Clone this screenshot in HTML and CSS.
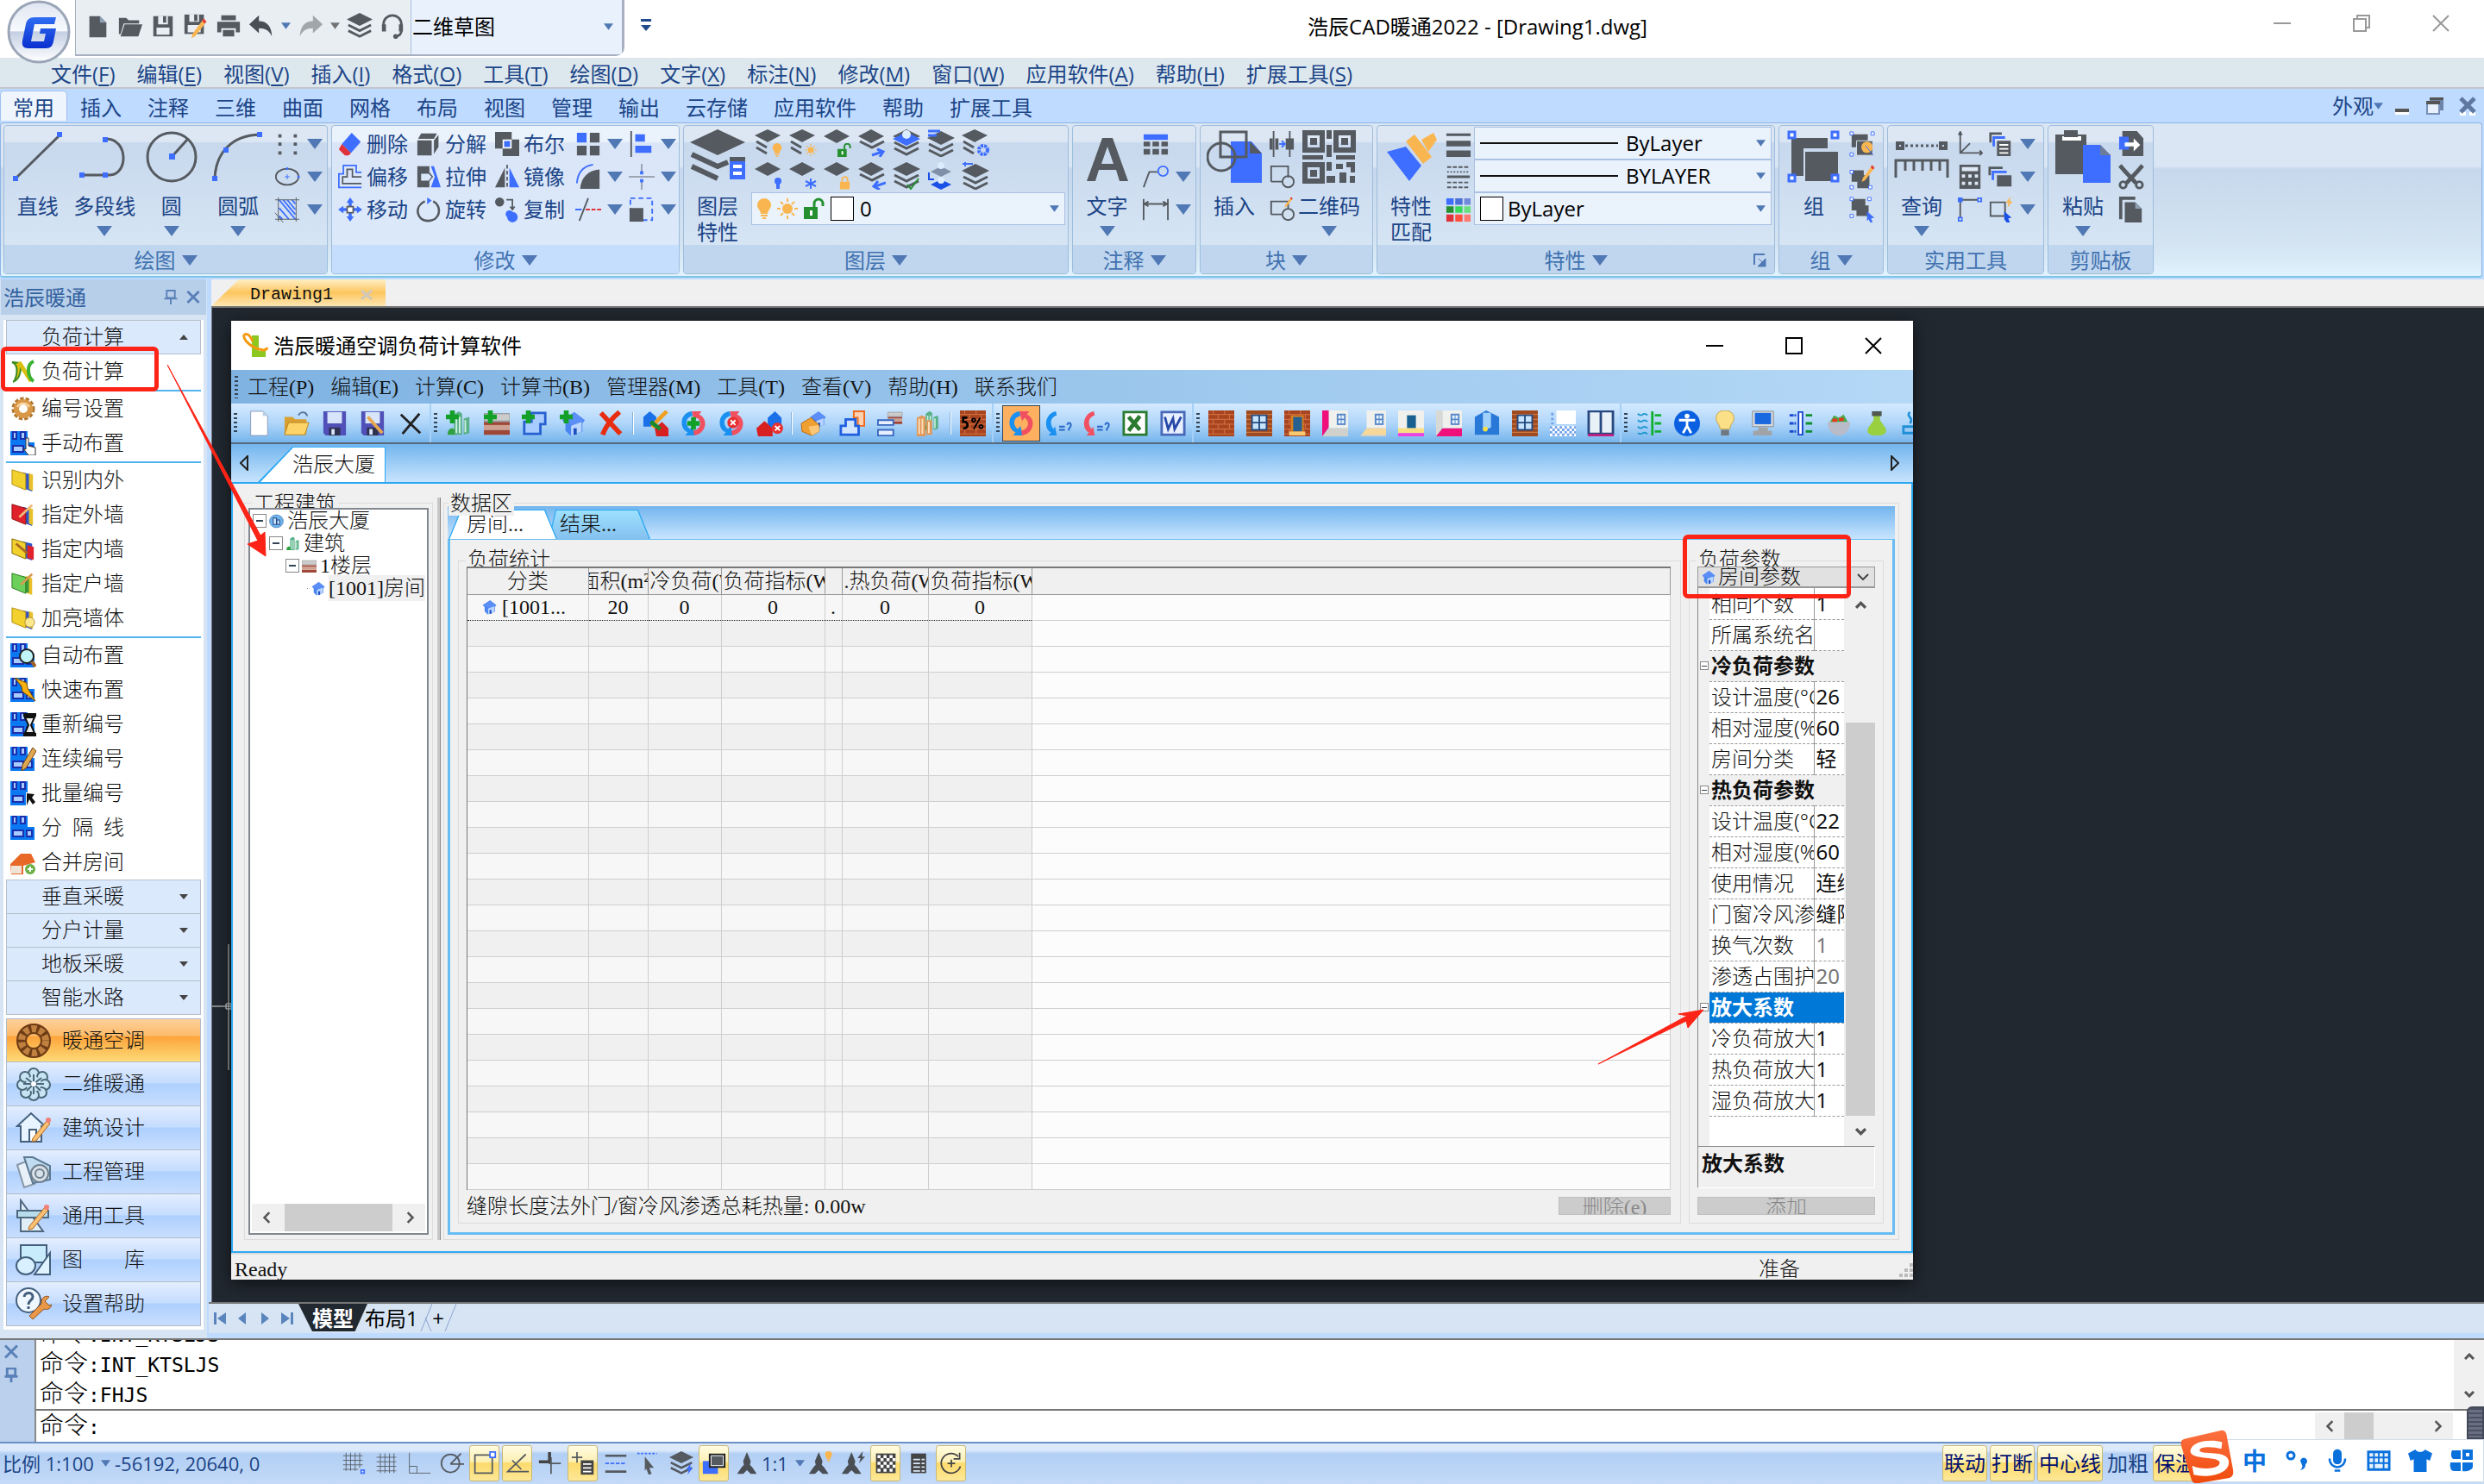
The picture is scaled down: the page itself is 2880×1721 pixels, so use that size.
FILE: index.html
```html
<!DOCTYPE html>
<html lang="zh-CN">
<head>
<meta charset="utf-8">
<title>浩辰CAD暖通2022 - [Drawing1.dwg]</title>
<link rel="stylesheet" href="styles.css">
</head>
<body>
<svg class="defs" aria-hidden="true">
<defs>
<linearGradient id="gLogo" x1="0" y1="0" x2="0" y2="1"><stop offset="0" stop-color="#dfe6f2"/><stop offset=".48" stop-color="#f7f9fd"/><stop offset=".5" stop-color="#c4cfe4"/><stop offset="1" stop-color="#fff"/></linearGradient>
<linearGradient id="gG" x1="0" y1="0" x2="0" y2="1"><stop offset="0" stop-color="#2f6df2"/><stop offset="1" stop-color="#0a2fd0"/></linearGradient>
<linearGradient id="gS" x1="0" y1="0" x2="0" y2="1"><stop offset="0" stop-color="#fb7040"/><stop offset="1" stop-color="#f04a0c"/></linearGradient>
<symbol id="dn" viewBox="0 0 18 12"><path d="M0 0h18l-9 12z" fill="#5078b4"/></symbol>
<symbol id="sheets" viewBox="0 0 32 32"><path d="M16 0l16 8-16 8L0 8z" fill="#555a60"/><path d="M2 15l14 7 14-7M2 22l14 7 14-7" fill="none" stroke="#555a60" stroke-width="3"/></symbol>
<symbol id="sheet2" viewBox="0 0 32 32"><path d="M15 0l15 7-15 8L0 7z" fill="#555a60"/><path d="M2 14l12 7M2 21l12 7" stroke="#555a60" stroke-width="3"/></symbol>
<symbol id="sheet1" viewBox="0 0 32 32"><path d="M15 0l15 8-15 8L0 8z" fill="#555a60"/></symbol>
<symbol id="bulb" viewBox="0 0 16 24"><path d="M8 0a8 8 0 0 1 8 8c0 4-4 6-4 10H4C4 14 0 12 0 8a8 8 0 0 1 8-8zM4 19h8v2H4zM6 22h4v2H6z" fill="#f9b650"/></symbol>
<symbol id="sun" viewBox="0 0 24 24"><circle cx="12" cy="12" r="6" fill="#f9b650"/><path d="M12 0v4M12 20v4M0 12h4M20 12h4M4 4l3 3M17 17l3 3M20 4l-3 3M7 17l-3 3" stroke="#f9b650" stroke-width="2"/></symbol>
<symbol id="unlock" viewBox="0 0 24 24"><path d="M0 10h16v14H0z" fill="#259030"/><path d="M12 10V6a5 5 0 0 1 10 0v3" fill="none" stroke="#259030" stroke-width="3"/><path d="M7 14h3v6H7z" fill="#fff"/></symbol>
<symbol id="lock" viewBox="0 0 24 24"><path d="M3 10h18v14H3z" fill="#f9b650"/><path d="M7 10V6a5 5 0 0 1 10 0v4" fill="none" stroke="#f9b650" stroke-width="3"/></symbol>
<symbol id="bolt" viewBox="0 0 12 20"><path d="M9 0L0 11h5l-2 9 9-12H7z" fill="#3d6eff"/></symbol>
<symbol id="obolt" viewBox="0 0 12 20"><path d="M9 0L0 11h5l-2 9 9-12H7z" fill="#f9b650"/></symbol>
<symbol id="rooms" viewBox="0 0 30 28"><path d="M0 0h20v13h8v15H0z" fill="#0a78f0"/><path d="M3 1h4v8H3zM12 1h5v8h-5zM3 17h12v7H3zM19 17h6v7h-6z" fill="#a8ccff" stroke="#1a2fb0" stroke-width="2"/></symbol>
<symbol id="wall" viewBox="0 0 30 30"><path d="M14 5l12 3v21l-8-3z" fill="#2f55c8"/><path d="M22 6l5 2v20l-5-2z" fill="#e8c02a"/><path d="M1 2l17 5v20L1 20z" fill="#f2d02e" stroke="#b08c10"/></symbol>
<symbol id="wallred" viewBox="0 0 30 30"><path d="M14 5l12 3v21l-8-3z" fill="#2f55c8"/><path d="M22 6l5 2v20l-5-2z" fill="#e8c02a"/><path d="M1 2l17 5v20L1 20z" fill="#e0202a" stroke="#901010"/><path d="M10 18L26 3" stroke="#f0b878" stroke-width="3"/></symbol>
<symbol id="wallin" viewBox="0 0 30 30"><path d="M14 5l12 3v21l-8-3z" fill="#2f55c8"/><path d="M20 10l8 2v16l-8-2z" fill="#e0202a"/><path d="M1 2l17 5v20L1 20z" fill="#f2d02e" stroke="#806808"/><path d="M6 8l14 12" stroke="#a86820" stroke-width="3"/></symbol>
<symbol id="wallgreen" viewBox="0 0 30 30"><path d="M18 5l8 3v21l-8-3z" fill="#e8c02a"/><path d="M14 5l8 3v18l-6 0z" fill="#3a9a3a"/><path d="M1 2l17 5v20L1 20z" fill="#6cd05a" stroke="#287820"/><path d="M12 16L26 3" stroke="#d89a50" stroke-width="3"/></symbol>
<symbol id="house" viewBox="0 0 32 32"><path d="M3 12L18 2l13 10-3 4v10l-15 5-6-6V16z" fill="#4a86f0"/><path d="M3 12L18 2l13 10-15 6z" fill="#5c8ef8"/><path d="M14 19l13-5v12l-13 5z" fill="#b8d4ff"/><path d="M17 22h4v8h-4z" fill="#2050c0"/></symbol>
<symbol id="plus" viewBox="0 0 16 16"><path d="M5 0h6v5h5v6h-5v5H5v-5H0V5h5z" fill="#12a028"/></symbol>
<symbol id="cyc" viewBox="0 0 32 32"><path d="M14 1C0 2-3 22 9 27l-3 4 12 0-3-12-3 4C5 19 6 8 15 7z" fill="#1a90f0"/><path d="M17 31c15-2 18-21 6-26l3-4H14l3 12 3-4c7 4 6 14-4 16z" fill="#f05060"/></symbol>
<symbol id="win" viewBox="0 0 32 32"><path d="M0 0h32v32H0z" fill="#a04a20"/><path d="M0 5h32M0 27h32M0 11h6M26 11h6M0 17h6M26 17h6M0 22h6M26 22h6" stroke="#d88850"/><path d="M6 5h20v20H6z" fill="#234a80"/><path d="M8 7h7v7H8zM17 7h7v7h-7zM8 16h7v7H8zM17 16h7v7h-7z" fill="#c8e4fc"/></symbol>
<symbol id="brick" viewBox="0 0 32 32"><path d="M0 0h32v32H0z" fill="#a84420"/><path d="M0 5h32M0 11h32M0 17h32M0 23h32M0 29h32M6 0v5M20 0v5M12 5v6M26 5v6M6 11v6M20 11v6M12 17v6M26 17v6M6 23v6M20 23v6" stroke="#d87848"/></symbol>
<symbol id="hroom" viewBox="0 0 32 32"><path d="M8 0h24v22H8z" fill="#f0f0ec"/><path d="M18 4h11v14H18z" fill="#5888c8"/><path d="M20 6h3v4h-3zM24 6h3v4h-3zM20 12h3v4h-3zM24 12h3v4h-3z" fill="#e8f4ff"/><path d="M8 22h24v10H0z" fill="#d0d0cc"/></symbol>
<symbol id="aa" viewBox="0 0 32 32"><path d="M16 1l5 12-1 5 3 3 6 9h-8l-5-5-5 5H3l6-9 3-3-1-5z" fill="#4a4f56"/></symbol>
<symbol id="bld" viewBox="0 0 32 32"><path d="M10 5l6-4 4 3v26H10zM22 10l7-2v20l-7 2z" fill="#58b088"/><path d="M13 8v20M17 8v20M24 12v15" stroke="#d0f0e0" stroke-width="2"/><path d="M2 30c0-8 6-10 9-6v6z" fill="#30a040"/></symbol>
<symbol id="floor" viewBox="0 0 32 32"><path d="M0 4h32v9H0z" fill="#ccc" stroke="#888"/><path d="M0 14h32v4H0zM0 24h32v6H0z" fill="#a04838"/><path d="M0 18h32v6H0z" fill="#d0a090"/></symbol>
<symbol id="plan" viewBox="0 0 32 32"><path d="M12 3h17v14h-6v12H3V14h9z" fill="#a8ccff" stroke="#2860d0" stroke-width="3"/></symbol>
<symbol id="floppy" viewBox="0 0 32 32"><path d="M2 1h28v30H5l-3-3z" fill="#5050b8"/><path d="M7 2h18v14H7z" fill="#d8e4fa"/><path d="M9 21h14v10H9z" fill="#303050"/><path d="M12 23h4v7h-4z" fill="#d8e4fa"/></symbol>
<symbol id="pen" viewBox="0 0 32 32"><path d="M27 1l4 5L14 28l-6 3 2-7z" fill="#f9b650"/><path d="M27 1l4 5-3 3-4-5z" fill="#e03a3a"/></symbol>
</defs>
</svg>

<header class="titlebar">
  <button class="logo" aria-label="应用程序菜单"><svg viewBox="0 0 76 76"><circle cx="38" cy="37" r="35" fill="url(#gLogo)" stroke="#9aa6b8" stroke-width="3"/><path d="M58 20H33c-6 0-9 3-10 8l-4 19c-1 6 1 9 7 9h20c6 0 8-3 9-8l3-15H40l-1 6h7l-2 9H29l4-20h23z" fill="url(#gG)"/></svg></button>
  <div class="qat">
    <button aria-label="新建"><svg viewBox="0 0 32 32"><path d="M6 4h13l8 8v18H6z" fill="#555a60"/><path d="M19 4l8 8h-8z" fill="#8fa0b5"/></svg></button>
    <button aria-label="打开"><svg viewBox="0 0 32 32"><path d="M2 6h9l3 3h13v4H8L4 26H2z" fill="#555a60"/><path d="M9 14h22l-5 15H4z" fill="#555a60"/></svg></button>
    <button aria-label="保存"><svg viewBox="0 0 32 32"><path d="M4 4h24v25H4z" fill="#555a60"/><path d="M10 4h12v10H10zM8 18h16v9H8z" fill="#e9eef2"/><path d="M16 4h4v8h-4z" fill="#555a60"/></svg></button>
    <button aria-label="另存为"><svg viewBox="0 0 32 32"><path d="M2 2h24v24H2z" fill="#555a60"/><path d="M8 2h12v9H8zM6 15h16v9H6z" fill="#e9eef2"/><path d="M14 2h4v8h-4z" fill="#555a60"/><use href="#pen" x="4" y="6" width="26" height="26"/></svg></button>
    <button aria-label="打印"><svg viewBox="0 0 32 32"><path d="M7 3h18v6H7zM2 11h28v13h-5v-5H7v5H2zM9 21h14v8H9z" fill="#555a60"/></svg></button>
    <button aria-label="撤销"><svg viewBox="0 0 32 32"><path d="M13 3v7c11 0 16 8 16 19-3-7-8-10-16-10v6L1 14z" fill="#4a4f56"/></svg></button>
    <svg class="tiny"><use href="#dn"/></svg>
    <button aria-label="重做"><svg viewBox="0 0 32 32"><path d="M19 3v7C8 10 3 18 3 29c3-7 8-10 16-10v6l12-11z" fill="#a2a6aa"/></svg></button>
    <svg class="tiny gray"><use href="#dn"/></svg>
    <button aria-label="图层"><svg><use href="#sheets"/></svg></button>
    <button aria-label="客服"><svg viewBox="0 0 32 32"><path d="M5 18v-4a11 11 0 0 1 22 0v8c0 4-3 6-6 7" fill="none" stroke="#555a60" stroke-width="3"/><path d="M3 14h5v9H3zM24 14h5v9h-5z" fill="#555a60"/><circle cx="20" cy="29" r="3" fill="#555a60"/></svg></button>
    <label class="workspace"><select aria-label="工作空间"><option>二维草图</option></select><svg class="tiny"><use href="#dn"/></svg></label>
  </div>
  <button class="custom" aria-label="自定义"><svg viewBox="0 0 12 16"><path d="M0 0h12v3H0zM0 7h12l-6 7z" fill="#1f4a8c"/></svg></button>
  <h1>浩辰CAD暖通2022 - [Drawing1.dwg]</h1>
  <div class="winbtns">
    <button aria-label="最小化"><svg viewBox="0 0 20 20"><path d="M0 10h20" stroke="#999" stroke-width="2"/></svg></button>
    <button aria-label="还原"><svg viewBox="0 0 20 20"><path d="M1 5h14v14H1zM5 5V1h14v14h-4" fill="none" stroke="#999" stroke-width="2"/></svg></button>
    <button aria-label="关闭"><svg viewBox="0 0 20 20"><path d="M1 1l18 18M19 1L1 19" stroke="#999" stroke-width="2"/></svg></button>
  </div>
</header>

<nav class="menubar">
  <a href="#">文件(<u>F</u>)</a><a href="#">编辑(<u>E</u>)</a><a href="#">视图(<u>V</u>)</a><a href="#">插入(<u>I</u>)</a><a href="#">格式(<u>O</u>)</a><a href="#">工具(<u>T</u>)</a><a href="#">绘图(<u>D</u>)</a><a href="#">文字(<u>X</u>)</a><a href="#">标注(<u>N</u>)</a><a href="#">修改(<u>M</u>)</a><a href="#">窗口(<u>W</u>)</a><a href="#">应用软件(<u>A</u>)</a><a href="#">帮助(<u>H</u>)</a><a href="#">扩展工具(<u>S</u>)</a>
</nav>

<nav class="ribbontabs">
  <a class="on" href="#">常用</a><a href="#">插入</a><a href="#">注释</a><a href="#">三维</a><a href="#">曲面</a><a href="#">网格</a><a href="#">布局</a><a href="#">视图</a><a href="#">管理</a><a href="#">输出</a><a href="#">云存储</a><a href="#">应用软件</a><a href="#">帮助</a><a href="#">扩展工具</a>
  <div class="docbtns">
    <button>外观<svg class="tiny"><use href="#dn"/></svg></button>
    <button aria-label="最小化文档"><svg viewBox="0 0 22 22"><path d="M3 14h16v4H3z" fill="#555"/><path d="M3 18h16v3H3z" fill="#fff"/></svg></button>
    <button aria-label="还原文档"><svg viewBox="0 0 22 22"><path d="M5 1h16v15h-4V5H5z" fill="#6c84a8"/><path d="M2 6h14v14H2z" fill="#e8f0fc" stroke="#7890b8" stroke-width="2"/><path d="M1 5h16v4H1zM5 1h16v3H5z" fill="#555"/></svg></button>
    <button aria-label="关闭文档"><svg viewBox="0 0 22 22"><path d="M2 20h7M13 20h7" stroke="#fff" stroke-width="4"/><path d="M3 2l16 16M19 2L3 18" stroke="#6078a0" stroke-width="5"/></svg></button>
  </div>
</nav>

<div class="ribbon">
  <section class="panel p-draw"><div class="pbody">
    <button class="big"><svg viewBox="0 0 64 64"><path d="M6 57L58 6" stroke="#555a60" stroke-width="3"/><path d="M3 54h6v6H3zM54 3h6v6h-6z" fill="#3d6eff"/></svg>直线</button>
    <button class="big"><svg viewBox="0 0 64 64"><path d="M6 53h32c22 0 22-42-4-42" fill="none" stroke="#555a60" stroke-width="3"/><path d="M3 50h6v6H3zM30 50h6v6h-6zM30 9h6v6h-6z" fill="#3d6eff"/></svg>多段线<svg class="ar"><use href="#dn"/></svg></button>
    <button class="big"><svg viewBox="0 0 64 64"><circle cx="32" cy="32" r="28" fill="none" stroke="#555a60" stroke-width="3"/><path d="M32 32L50 12" stroke="#555a60" stroke-width="3"/><path d="M29 28h7v7h-7z" fill="#3d6eff"/></svg>圆<svg class="ar"><use href="#dn"/></svg></button>
    <button class="big"><svg viewBox="0 0 64 64"><path d="M5 57C6 28 24 7 57 6" fill="none" stroke="#555a60" stroke-width="3"/><path d="M2 54h6v6H2zM54 3h6v6h-6zM15 21h6v6h-6z" fill="#3d6eff"/></svg>圆弧<svg class="ar"><use href="#dn"/></svg></button>
    <div class="smalls two">
      <button aria-label="点"><svg viewBox="0 0 32 32"><path d="M5 4h4v4H5zM24 4h4v4h-4zM5 14h4v4H5zM24 14h4v4h-4zM5 25h4v4H5zM24 25h4v4h-4z" fill="#555a60"/></svg></button><svg class="ar"><use href="#dn"/></svg>
      <button aria-label="椭圆"><svg viewBox="0 0 32 32"><ellipse cx="16" cy="16" rx="14" ry="10" fill="none" stroke="#555a60" stroke-width="2"/><path d="M16 13v6M13 16h6M29 15h2v2h-2zM15 5h2v2h-2z" stroke="#3d6eff" fill="#3d6eff"/></svg></button><svg class="ar"><use href="#dn"/></svg>
      <button aria-label="填充"><svg viewBox="0 0 32 32"><path d="M6 4l20 24M16 4l10 12M6 14l12 14M22 4l4 5M6 24l4 4M11 4l15 18" stroke="#3d6eff" stroke-width="2"/><path d="M1 4h30M1 28h30M5 1v30M27 1v30M1 20l10 12" stroke="#555a60" stroke-width="1"/></svg></button><svg class="ar"><use href="#dn"/></svg>
    </div></div><h2>绘图<svg class="ar"><use href="#dn"/></svg></h2></section>

  <section class="panel lit p-modify"><div class="pbody">
    <div class="tools">
      <button><svg viewBox="0 0 32 32"><path d="M18 1l12 12-13 15L5 16z" fill="#3d6eff"/><path d="M5 16l12 12-3 3H9l-8-8z" fill="#e0323a"/></svg>删除</button>
      <button><svg viewBox="0 0 32 32"><path d="M1 11h19v20H1zM6 2h21l-4 7H2zM23 11l6-7v16l-6 9z" fill="#555a60"/></svg>分解</button>
      <button><svg viewBox="0 0 32 32"><path d="M0 0h22v22H0zM10 10h22v22H10z" fill="#555a60"/><path d="M10 10h12v12H10z" fill="#fff"/><path d="M12 12h8v8h-8z" fill="#3d6eff"/></svg>布尔</button>
      <button><svg viewBox="0 0 32 32"><path d="M31 30H1V12h6V1h17v9h7" fill="none" stroke="#3d6eff" stroke-width="2"/><path d="M31 25H6v-9h6V6h7v10h12" fill="none" stroke="#555a60" stroke-width="2"/></svg>偏移</button>
      <button><svg viewBox="0 0 32 32"><path d="M1 2h16v8l5 6-5 6v8H1zM6 12v9h10l4-5-4-4z" fill="#555a60" fill-rule="evenodd"/><path d="M19 2h4l9 28H19l5-14z" fill="#3d6eff"/></svg>拉伸</button>
      <button><svg viewBox="0 0 32 32"><path d="M13 4v26H0z" fill="#555a60"/><path d="M19 4v26h13z" fill="#3d6eff"/><path d="M16 0v32" stroke="#555a60" stroke-width="2" stroke-dasharray="5 3"/></svg>镜像</button>
      <button><svg viewBox="0 0 32 32"><path d="M16 0l5 7h-3v6h-4V7h-3zM16 32l5-7h-3v-6h-4v6h-3zM0 16l7-5v3h6v4H7v3zM32 16l-7-5v3h-6v4h6v3z" fill="#3d6eff"/><path d="M12 12h8v8h-8z" fill="#fff" stroke="#555a60" stroke-width="2"/></svg>移动</button>
      <button><svg viewBox="0 0 32 32"><path d="M11 5C-4 12 0 31 15 31c17 0 19-20 7-26" fill="none" stroke="#555a60" stroke-width="3"/><path d="M14 0l6 4-6 5z" fill="#3d6eff"/></svg>旋转</button>
      <button><svg viewBox="0 0 32 32"><circle cx="6" cy="6" r="6" fill="#555a60"/><path d="M15 3h8v12M20 12l3 4 3-4" fill="none" stroke="#555a60" stroke-width="2"/><circle cx="23" cy="26" r="7" fill="#3d6eff"/><circle cx="19" cy="22" r="5" fill="#3d6eff"/></svg>复制</button>
    </div>
    <div class="smalls four">
      <button aria-label="阵列"><svg viewBox="0 0 32 32"><path d="M2 2h12v12H2z" fill="#3d6eff"/><path d="M18 2h12v12H18zM2 18h12v12H2zM18 18h12v12H18z" fill="#555a60"/></svg></button><svg class="ar"><use href="#dn"/></svg>
      <button aria-label="对齐"><svg viewBox="0 0 32 32"><path d="M3 0v32" stroke="#555a60" stroke-width="2"/><path d="M8 4h12v9H8zM8 18h20v9H8z" fill="#3d6eff"/></svg></button><svg class="ar"><use href="#dn"/></svg>
      <button aria-label="圆角"><svg viewBox="0 0 32 32"><path d="M6 31C7 17 16 8 30 7v24z" fill="#555a60"/><path d="M2 24C3 10 10 3 22 1" fill="none" stroke="#3d6eff" stroke-width="2"/></svg></button><svg class="ar"><use href="#dn"/></svg>
      <button aria-label="打断"><svg viewBox="0 0 32 32"><path d="M16 0v11M16 21v11M0 16h32" stroke="#555a60" stroke-width="1"/><path d="M14 9h4v4h-4zM14 19h4v4h-4z" fill="#3d6eff"/></svg></button><svg class="ar"><use href="#dn"/></svg>
      <button aria-label="修剪"><svg viewBox="0 0 32 32"><path d="M16 2L5 30" stroke="#555a60" stroke-width="2"/><path d="M0 16h8" stroke="#3d6eff" stroke-width="2"/><path d="M13 16h19" stroke="#e0323a" stroke-width="2" stroke-dasharray="5 2"/></svg></button><svg class="ar"><use href="#dn"/></svg>
      <button aria-label="缩放"><svg viewBox="0 0 32 32"><path d="M2 2h27v27H2z" fill="none" stroke="#3d6eff" stroke-width="2" stroke-dasharray="6 4"/><path d="M1 14h17v17H1z" fill="#555a60"/></svg></button><svg class="ar"><use href="#dn"/></svg>
    </div></div><h2>修改<svg class="ar"><use href="#dn"/></svg></h2></section>

  <section class="panel p-layer"><div class="pbody">
    <button class="big wrap"><svg viewBox="0 0 64 64"><path d="M32 0l32 15-32 15L0 15z" fill="#555a60"/><path d="M2 29l30 14 12-5M2 43l30 14" fill="none" stroke="#555a60" stroke-width="6"/><path d="M46 32h18v26H46z" fill="#3d6eff"/><path d="M46 32h18v5H46z" fill="#555a60"/><path d="M50 41h10v4H50zM50 49h10v4H50z" fill="#fff"/></svg>图层<br>特性</button>
    <div class="layercol">
      <div class="layericons">
        <button aria-label="关闭图层"><svg viewBox="0 0 32 32"><use href="#sheet2"/><use href="#bulb" x="20" y="16" width="12" height="16"/></svg></button>
        <button aria-label="冻结图层"><svg viewBox="0 0 32 32"><use href="#sheet2"/><use href="#sun" x="18" y="16" width="14" height="16"/></svg></button>
        <button aria-label="解锁图层"><svg viewBox="0 0 32 32"><use href="#sheet1"/><use href="#unlock" x="16" y="16" width="16" height="16"/></svg></button>
        <button aria-label="图层漫游"><svg viewBox="0 0 32 32"><use href="#sheet1"/><path d="M2 14l14 7 14-7" fill="none" stroke="#555a60" stroke-width="3"/><path d="M16 30l12-4M22 23l7 3-4 6" fill="none" stroke="#3d6eff" stroke-width="3"/></svg></button>
        <button aria-label="图层置为当前"><svg viewBox="0 0 32 32"><use href="#sheets"/><path d="M16 3l16 8-16 8L0 11z" fill="#3d6eff"/><circle cx="16" cy="6" r="5" fill="#dcecff"/></svg></button>
        <button aria-label="匹配图层"><svg viewBox="0 0 32 32"><use href="#sheets" y="2"/><path d="M1 2h14M1 7h10" stroke="#3d6eff" stroke-width="3"/></svg></button>
        <button aria-label="图层状态"><svg viewBox="0 0 32 32"><use href="#sheet2"/><circle cx="25" cy="24" r="5" fill="none" stroke="#3d6eff" stroke-width="4" stroke-dasharray="3 1"/></svg></button>
        <button aria-label="打开图层"><svg viewBox="0 0 32 32"><use href="#sheet1"/><circle cx="27" cy="22" r="4" fill="#3d6eff"/><path d="M25 24h4v7h-4z" fill="#3d6eff"/></svg></button>
        <button aria-label="解冻图层"><svg viewBox="0 0 32 32"><use href="#sheet1"/><path d="M25 19v12M19 22l12 6M31 22l-12 6" stroke="#3d6eff" stroke-width="2"/></svg></button>
        <button aria-label="锁定图层"><svg viewBox="0 0 32 32"><use href="#sheet1"/><use href="#lock" x="17" y="16" width="15" height="16"/></svg></button>
        <button aria-label="上一图层"><svg viewBox="0 0 32 32"><use href="#sheet1"/><path d="M2 14l14 7 14-7" fill="none" stroke="#555a60" stroke-width="3"/><path d="M32 24l-12 4M23 22l-5 6 7 4" fill="none" stroke="#3d6eff" stroke-width="3"/></svg></button>
        <button aria-label="更改图层"><svg viewBox="0 0 32 32"><use href="#sheets"/><path d="M17 26l4 5 9-12" fill="none" stroke="#259030" stroke-width="2"/></svg></button>
        <button aria-label="复制到图层"><svg viewBox="0 0 32 32"><path d="M16 5l12 6-12 6-12-6z" fill="#8090a8"/><path d="M16 20l12 6-12 6-12-6z" fill="#1a50e8"/><circle cx="16" cy="4" r="4" fill="#dcecff"/><circle cx="16" cy="21" r="4" fill="#dcecff"/><path d="M2 12v8h6" fill="none" stroke="#1a50e8" stroke-width="2"/></svg></button>
        <button aria-label="恢复图层"><svg viewBox="0 0 32 32"><use href="#sheets" y="2"/><path d="M1 2h12M4 0v5" stroke="#3d6eff" stroke-width="2"/></svg></button>
      </div>
      <label class="combo"><svg class="i16"><use href="#bulb"/></svg><svg class="i24"><use href="#sun"/></svg><svg class="i24"><use href="#unlock"/></svg><i class="swatch"></i><select aria-label="当前图层"><option>0</option></select><svg class="tiny"><use href="#dn"/></svg></label>
    </div></div><h2>图层<svg class="ar"><use href="#dn"/></svg></h2></section>

  <section class="panel p-anno"><div class="pbody">
    <button class="big"><svg viewBox="0 0 64 64"><path d="M26 10h12l18 50H46l-4-13H22l-4 13H8zM32 20l-7 20h14z" fill="#555a60" fill-rule="evenodd"/></svg>文字<svg class="ar"><use href="#dn"/></svg></button>
    <div class="smalls two">
      <button aria-label="表格"><svg viewBox="0 0 32 32"><path d="M1 4h30v7H1z" fill="#3d6eff"/><path d="M1 13h8v6H1zM12 13h8v6h-8zM23 13h8v6h-8zM1 22h8v7H1zM12 22h8v7h-8zM23 22h8v7h-8z" fill="#555a60"/></svg></button><i></i>
      <button aria-label="引线"><svg viewBox="0 0 32 32"><path d="M1 29L8 10h10" fill="none" stroke="#555a60" stroke-width="2"/><circle cx="25" cy="9" r="6" fill="none" stroke="#3d6eff" stroke-width="2"/></svg></button><svg class="ar"><use href="#dn"/></svg>
      <button aria-label="标注"><svg viewBox="0 0 32 32"><path d="M1 3v26M31 3v26M1 9h30M7 6L2 9l5 3M25 6l5 3-5 3" fill="none" stroke="#555a60" stroke-width="2"/></svg></button><svg class="ar"><use href="#dn"/></svg>
    </div></div><h2>注释<svg class="ar"><use href="#dn"/></svg></h2></section>

  <section class="panel p-block"><div class="pbody">
    <button class="big"><svg viewBox="0 0 64 64"><path d="M28 14h24l12 14v34H28z" fill="#3d6eff"/><path d="M50 14l14 14H50z" fill="#555a60"/><path d="M16 3h30v29H16z" fill="none" stroke="#555a60" stroke-width="3"/><circle cx="17" cy="32" r="16" fill="none" stroke="#555a60" stroke-width="3"/></svg>插入</button>
    <div class="smalls">
      <button aria-label="编辑块"><svg viewBox="0 0 32 32"><path d="M1 9h4v14H1zM8 9h4v14H8zM21 9h10v14H21z" fill="#555a60"/><path d="M6 0v32M26 0v32" stroke="#555a60" stroke-width="2"/><path d="M13 16h6M16 12l4 4-4 4" fill="none" stroke="#3d6eff" stroke-width="2"/></svg></button>
      <button aria-label="创建块"><svg viewBox="0 0 32 32"><path d="M3 22V3h21v14M3 22h14" fill="none" stroke="#555a60" stroke-width="2"/><circle cx="24" cy="22" r="7" fill="none" stroke="#555a60" stroke-width="2"/></svg></button>
      <button aria-label="属性"><svg viewBox="0 0 32 32"><path d="M3 22V6h21v10M3 22h14" fill="none" stroke="#555a60" stroke-width="2"/><circle cx="24" cy="22" r="7" fill="none" stroke="#555a60" stroke-width="2"/><use href="#pen" x="15" width="16" height="14"/></svg></button>
    </div>
    <button class="big"><svg viewBox="0 0 64 64"><path d="M4 4h20v20H4zM40 4h20v20H40zM4 41h20v19H4z" fill="none" stroke="#555a60" stroke-width="6"/><path d="M10 10h8v8h-8zM46 10h8v8h-8zM10 47h8v8h-8zM29 1h6v10h-6zM29 18h6v14h-6zM1 30h24v5H1zM40 30h22v5H40zM29 38h6v10h-6zM40 40h8v6h-8zM52 38h10v12h-5v-6h-5zM29 54h10v8H29zM44 50h8v12h-8zM56 54h6v8h-6z" fill="#555a60"/></svg>二维码<svg class="ar"><use href="#dn"/></svg></button>
    </div><h2>块<svg class="ar"><use href="#dn"/></svg></h2></section>

  <section class="panel p-prop"><div class="pbody">
    <button class="big wrap"><svg viewBox="0 0 64 64"><path d="M4 26l22-6 18 22-14 18z" fill="#3d6eff"/><path d="M26 14l10-8 20 26-10 8z" fill="#f9b650"/><path d="M44 12l14-8 4 8-10 14z" fill="#f9b650"/></svg>特性<br>匹配</button>
    <div class="smalls">
      <button aria-label="线宽"><svg viewBox="0 0 32 32"><path d="M1 3h30v3H1zM1 12h30v7H1zM1 24h30v8H1z" fill="#555a60"/></svg></button>
      <button aria-label="线型"><svg viewBox="0 0 32 32"><path d="M2 4h28M2 23h28M2 29h28" stroke="#555a60" stroke-width="2" stroke-dasharray="5 2"/><path d="M2 10h28" stroke="#555a60" stroke-width="2" stroke-dasharray="2 2"/><path d="M2 16h28" stroke="#555a60" stroke-width="3"/></svg></button>
      <button aria-label="颜色"><svg viewBox="0 0 32 32"><path d="M1 2h9v8H1z" fill="#3d6eff"/><path d="M12 2h9v8h-9z" fill="#4a70d8"/><path d="M23 2h8v8h-8z" fill="#6e8ad8"/><path d="M1 12h9v8H1z" fill="#259030"/><path d="M12 12h9v8h-9z" fill="#38d858"/><path d="M23 12h8v8h-8z" fill="#68e080"/><path d="M1 22h9v9H1z" fill="#e0323a"/><path d="M12 22h9v9h-9z" fill="#ff5040"/><path d="M23 22h8v9h-8z" fill="#ff7a72"/></svg></button>
    </div>
    <div class="combos">
      <label class="combo"><i class="line"></i><select aria-label="线宽"><option>ByLayer</option></select><svg class="tiny"><use href="#dn"/></svg></label>
      <label class="combo"><i class="line"></i><select aria-label="线型"><option>BYLAYER</option></select><svg class="tiny"><use href="#dn"/></svg></label>
      <label class="combo"><i class="swatch"></i><select aria-label="颜色"><option>ByLayer</option></select><svg class="tiny"><use href="#dn"/></svg></label>
    </div></div><h2>特性<svg class="ar"><use href="#dn"/></svg><svg class="launch" viewBox="0 0 16 16"><path d="M1 13V1h12" fill="none" stroke="#5078b4" stroke-width="2"/><path d="M6 6l7 7M14 6v9H5z" fill="#5078b4" stroke="#5078b4"/></svg></h2></section>

  <section class="panel p-group"><div class="pbody">
    <button class="big"><svg viewBox="0 0 64 64"><path d="M6 10h42v12H20v32H6zM22 26h38v34H22z" fill="#555a60"/><path d="M3 3h7v7H3zM53 3h7v7h-7zM3 53h7v7H3zM53 53h7v7h-7z" fill="#fff" stroke="#3d6eff" stroke-width="3"/></svg>组</button>
    <div class="smalls">
      <button aria-label="解除编组"><svg viewBox="0 0 32 32"><path d="M3 4h20v16H3z" fill="#555a60"/><path d="M9 12h20v18H9z" fill="#555a60" stroke="#dde8f4"/><circle cx="22" cy="20" r="7" fill="#f9b650"/><path d="M20 18l10 12M1 1h4v4H1zM27 1h4v4h-4zM1 27h4v4H1z" fill="#fff" stroke="#3d6eff"/></svg></button>
      <button aria-label="编辑组"><svg viewBox="0 0 32 32"><path d="M3 8h15v14H3zM10 14h15v16H10z" fill="#555a60"/><use href="#pen" x="10" width="22" height="24"/><path d="M1 8h4v4H1zM1 27h4v4H1zM24 27h4v4h-4z" fill="#fff" stroke="#3d6eff"/></svg></button>
      <button aria-label="选择组"><svg viewBox="0 0 32 32"><path d="M3 3h17v14H3zM9 11h15v13H9z" fill="#555a60"/><path d="M22 18l9 8-4 1 2 5-3 0-2-4-2 2z" fill="#3d6eff"/><path d="M1 1h4v4H1zM23 1h4v4h-4zM1 22h4v4H1z" fill="#fff" stroke="#3d6eff"/></svg></button>
    </div></div><h2>组<svg class="ar"><use href="#dn"/></svg></h2></section>

  <section class="panel p-util"><div class="pbody">
    <button class="big"><svg viewBox="0 0 64 64"><path d="M4 16h6v6H4zM54 16h6v6h-6z" fill="none" stroke="#555a60" stroke-width="4"/><path d="M13 19h38" stroke="#555a60" stroke-width="3" stroke-dasharray="3 3"/><path d="M2 56V36h60v20M13 36v12M23 36v12M33 36v12M43 36v12M53 36v12" fill="none" stroke="#555a60" stroke-width="3"/></svg>查询<svg class="ar"><use href="#dn"/></svg></button>
    <div class="smalls">
      <button aria-label="坐标"><svg viewBox="0 0 32 32"><path d="M4 2v25h27M4 27l12-12M2 5l2-4 2 4M28 24l3 3-3 3" fill="none" stroke="#555a60" stroke-width="2"/></svg></button>
      <button aria-label="计算器"><svg viewBox="0 0 32 32"><path d="M3 1h26v30H3z" fill="#555a60"/><path d="M6 4h20v5H6zM6 13h4v4H6zM14 13h4v4h-4zM22 13h4v4h-4zM6 22h4v4H6zM14 22h4v4h-4zM22 22h4v4h-4z" fill="#dde8f4"/></svg></button>
      <button aria-label="测量"><svg viewBox="0 0 32 32"><path d="M4 4v24M4 4h24" stroke="#555a60" stroke-width="2"/><path d="M1 1h6v6H1z" fill="#3d6eff"/><path d="M26 2h4v4h-4zM2 26h4v4H2z" fill="#fff" stroke="#3d6eff" stroke-width="2"/></svg></button>
    </div>
    <div class="smalls two">
      <button aria-label="快速选择"><svg viewBox="0 0 32 32"><path d="M3 14V3h14" fill="none" stroke="#555a60" stroke-width="3"/><path d="M7 19V8h14" fill="none" stroke="#3d6eff" stroke-width="3"/><path d="M11 12h17v19H11z" fill="#555a60"/><path d="M14 17h11M14 22h11M14 27h11" stroke="#fff" stroke-width="2"/></svg></button><svg class="ar"><use href="#dn"/></svg>
      <button aria-label="绘图次序"><svg viewBox="0 0 32 32"><path d="M2 14V5h16" fill="none" stroke="#555a60" stroke-width="3"/><path d="M6 20V10h17" fill="none" stroke="#3d6eff" stroke-width="3"/><path d="M11 14h18v14H11z" fill="#555a60"/></svg></button><svg class="ar"><use href="#dn"/></svg>
      <button aria-label="选择"><svg viewBox="0 0 32 32"><path d="M3 7h18v17H3z" fill="none" stroke="#555a60" stroke-width="2"/><use href="#obolt" x="20" width="12" height="14"/><path d="M20 18l9 8-4 1 2 5-4 0-3-4z" fill="#1a50e8"/></svg></button><svg class="ar"><use href="#dn"/></svg>
    </div></div><h2>实用工具</h2></section>

  <section class="panel p-clip"><div class="pbody">
    <button class="big"><svg viewBox="0 0 64 64"><path d="M0 6h36v46H0z" fill="#555a60"/><path d="M8 8h22v5H8z" fill="#fff"/><path d="M10 1h16v8H10z" fill="#555a60"/><path d="M32 18h20l12 12v32H32z" fill="#3d6eff"/><path d="M52 18l12 12H52z" fill="#6d7c98"/></svg>粘贴<svg class="ar"><use href="#dn"/></svg></button>
    <div class="smalls">
      <button aria-label="粘贴为块"><svg viewBox="0 0 32 32"><path d="M5 0h18l8 9v22H5z" fill="#555a60"/><path d="M1 7h12v16H1z" fill="#3d6eff"/><path d="M8 14h11V9l8 8-8 8v-6H8z" fill="#fff"/></svg></button>
      <button aria-label="剪切"><svg viewBox="0 0 32 32"><path d="M2 2c10 12 14 15 20 22M30 2C20 14 16 17 10 24" stroke="#555a60" stroke-width="5" fill="none"/><circle cx="6" cy="26" r="4" fill="none" stroke="#555a60" stroke-width="3"/><circle cx="26" cy="26" r="4" fill="none" stroke="#555a60" stroke-width="3"/></svg></button>
      <button aria-label="复制"><svg viewBox="0 0 32 32"><path d="M1 0h20v4H5v24H1z" fill="#555a60"/><path d="M8 7h13l8 8v17H8z" fill="#555a60"/><path d="M21 7l8 8h-8z" fill="#8fa0b5"/></svg></button>
    </div></div><h2>剪贴板</h2></section>
</div>

<main class="work">
  <aside class="side">
    <div class="sidehead"><h2>浩辰暖通</h2>
      <button aria-label="固定"><svg viewBox="0 0 16 18"><path d="M3 1h10v9H3zM0 11h16M8 11v7" fill="none" stroke="#5a80b8" stroke-width="2"/></svg></button>
      <button aria-label="关闭面板"><svg viewBox="0 0 16 18"><path d="M1 2l14 14M15 2L1 16" stroke="#5a80b8" stroke-width="3"/></svg></button></div>
    <div class="sidebox">
      <button class="acc up">负荷计算<svg viewBox="0 0 10 6"><path d="M0 6h10L5 0z"/></svg></button>
      <ul>
        <li class="hot sep"><button><svg viewBox="0 0 30 28"><path d="M2 3c10 4 4 22 1 23 9-3 10-16 8-22z" fill="#e0c010" stroke="#3a8a20" stroke-width="2"/><path d="M10 3l14 22" fill="none" stroke="#d8c010" stroke-width="5"/><path d="M27 2c-10 4-6 20 0 23" fill="none" stroke="#38b030" stroke-width="4"/></svg>负荷计算</button></li>
        <li><button><svg viewBox="0 0 30 28"><circle cx="15" cy="14" r="11" fill="none" stroke="#b07830" stroke-width="5" stroke-dasharray="4 2"/><circle cx="15" cy="14" r="8" fill="none" stroke="#d89848" stroke-width="6"/><path d="M8 12a8 8 0 0 1 14 0" fill="none" stroke="#fcdca8" stroke-width="2"/></svg>编号设置</button></li>
        <li class="sep"><button><svg viewBox="0 0 30 28"><use href="#rooms"/><path d="M18 8l3 0v9l8 2v9h-8l-6-8 3 1z" fill="#fff" stroke="#333"/></svg>手动布置</button></li>
        <li><button><svg><use href="#wall"/></svg>识别内外</button></li>
        <li><button><svg><use href="#wallred"/></svg>指定外墙</button></li>
        <li><button><svg><use href="#wallin"/></svg>指定内墙</button></li>
        <li><button><svg><use href="#wallgreen"/></svg>指定户墙</button></li>
        <li class="sep"><button><svg viewBox="0 0 30 30"><use href="#wall"/><circle cx="23" cy="20" r="6" fill="#fbe890" stroke="#b09030"/></svg>加亮墙体</button></li>
        <li><button><svg viewBox="0 0 30 28"><use href="#rooms"/><circle cx="19" cy="15" r="8" fill="#c0f4f8" stroke="#222" stroke-width="2"/><path d="M25 21l4 6" stroke="#a06028" stroke-width="4"/></svg>自动布置</button></li>
        <li><button><svg viewBox="0 0 30 28"><use href="#rooms"/><path d="M5 0l14 6 1 6 9 15-15-11-1-6z" fill="#f8b010" stroke="#7a5000"/></svg>快速布置</button></li>
        <li><button><svg viewBox="0 0 30 28"><use href="#rooms"/><path d="M15 3h15M15 26h15" stroke="#111" stroke-width="4"/><path d="M17 6h11l-4 9 4 9H17l4-9z" fill="#eee" stroke="#111" stroke-width="2"/></svg>重新编号</button></li>
        <li><button><svg viewBox="0 0 30 28"><use href="#rooms"/><path d="M26 1l4 4-12 20-5 3 1-7z" fill="#e0a850" stroke="#704010"/></svg>连续编号</button></li>
        <li><button><svg viewBox="0 0 30 28"><use href="#rooms"/><path d="M18 13h12v15H18z" fill="#fff"/><path d="M19 28V14l9 1-3 4 4 5-3 3-4-6z" fill="#111"/></svg>批量编号</button></li>
        <li><button><svg><use href="#rooms"/></svg>分 &nbsp;隔 &nbsp;线</button></li>
        <li><button><svg viewBox="0 0 30 28"><path d="M0 16L12 4h12l5 10-14 4v10H1z" fill="#e86828"/><path d="M1 18h12v9H1z" fill="#f0e4d8"/><circle cx="23" cy="22" r="6" fill="#6cb048"/><path d="M23 19v6M20 22h6" stroke="#fff" stroke-width="2"/></svg>合并房间</button></li>
      </ul>
      <button class="acc top">垂直采暖<svg viewBox="0 0 10 6"><path d="M0 0h10L5 6z"/></svg></button>
      <button class="acc">分户计量<svg viewBox="0 0 10 6"><path d="M0 0h10L5 6z"/></svg></button>
      <button class="acc">地板采暖<svg viewBox="0 0 10 6"><path d="M0 0h10L5 6z"/></svg></button>
      <button class="acc last">智能水路<svg viewBox="0 0 10 6"><path d="M0 0h10L5 6z"/></svg></button>
      <button class="cat on"><svg viewBox="0 0 42 40"><circle cx="21" cy="20" r="14" fill="none" stroke="#6e3c14" stroke-width="12"/><circle cx="21" cy="20" r="14" fill="none" stroke="#c08040" stroke-width="8" stroke-dasharray="6 3"/></svg>暖通空调</button>
      <button class="cat"><svg viewBox="0 0 42 40"><g fill="#c8e4f4" stroke="#4a6878" stroke-width="2"><circle cx="21" cy="8" r="6"/><circle cx="31" cy="12" r="6"/><circle cx="34" cy="21" r="6"/><circle cx="30" cy="30" r="6"/><circle cx="21" cy="33" r="6"/><circle cx="12" cy="30" r="6"/><circle cx="8" cy="21" r="6"/><circle cx="11" cy="12" r="6"/></g><circle cx="21" cy="20" r="9" fill="#c8e4f4"/><path d="M21 20V9M21 20l9-7M21 20h12M21 20l8 8M21 20v12M21 20l-8 8M21 20H9M21 20l-9-7" stroke="#4a6878" stroke-width="2"/><circle cx="21" cy="20" r="3" fill="#fff"/></svg>二维暖通</button>
      <button class="cat"><svg viewBox="0 0 42 40"><path d="M2 18L18 3l16 15h-4v18H6V18z" fill="#e8f4ff" stroke="#44607c" stroke-width="2"/><path d="M16 22h8v14h-8z" fill="#fff" stroke="#44607c" stroke-width="2"/><path d="M20 32L36 12l4 3-16 20-5 1z" fill="#f8c070" stroke="#b06828"/><circle cx="38" cy="11" r="3" fill="#f08078"/></svg>建筑设计</button>
      <button class="cat"><svg viewBox="0 0 42 40"><path d="M2 12l10-4 10 26-12 4z" fill="#e8f0f8" stroke="#8898a8" stroke-width="2"/><path d="M10 3h10l20 10v16l-20 4z" fill="#c0dcf0" stroke="#5a7890" stroke-width="2"/><circle cx="28" cy="22" r="10" fill="#d8e0e8" stroke="#708090" stroke-width="2"/><circle cx="28" cy="22" r="5" fill="none" stroke="#708090" stroke-width="2"/></svg>工程管理</button>
      <button class="cat"><svg viewBox="0 0 42 40"><path d="M6 2v36h26z" fill="#e0eef8" stroke="#506880" stroke-width="2"/><path d="M2 14h36v8H2z" fill="#b8dcec" stroke="#506880" stroke-width="2"/><path d="M16 32L34 10l4 3-18 22-5 1z" fill="#f8c070" stroke="#b06828"/><circle cx="36" cy="10" r="3" fill="#f08078"/></svg>通用工具</button>
      <button class="cat"><svg viewBox="0 0 42 40"><path d="M6 3h30v20H6z" fill="#c8ecfc" stroke="#44607c" stroke-width="2"/><path d="M22 37L40 12v25z" fill="#e0f4ff" stroke="#44607c" stroke-width="2"/><ellipse cx="12" cy="27" rx="11" ry="10" fill="#d8f0ff" stroke="#44607c" stroke-width="2"/></svg>图 &nbsp; &nbsp; &nbsp; &nbsp;库</button>
      <button class="cat"><svg viewBox="0 0 42 40"><circle cx="15" cy="16" r="14" fill="#f0f8ff" stroke="#44607c" stroke-width="2"/><path d="M10 12c1-6 10-6 10 0 0 4-5 4-5 9M15 23v3" fill="none" stroke="#44607c" stroke-width="3"/><path d="M16 34l14-14c-1-8 6-10 9-8l-5 5 5 5 3-1c-2 6-6 6-9 5L20 38z" fill="#e89848" stroke="#90501c"/></svg>设置帮助</button>
    </div>
  </aside>

  <section class="stage">
    <div class="doctabs"><a href="#">Drawing1 <svg viewBox="0 0 14 14"><path d="M1 2l12 10M13 2L1 12" stroke="#d0c8b8" stroke-width="3"/></svg></a></div>
    <div class="canvas">
      <svg class="cross" viewBox="0 0 24 146"><path d="M19 0v146M0 72h24" stroke="#e8e8e8" stroke-width="1"/><path d="M16 69h6v6h-6z" fill="none" stroke="#e8e8e8"/></svg>
      <section class="dialog">
        <header class="dtitle"><svg viewBox="0 0 30 30"><path d="M11 3h8v18h8v7H11z" fill="#8cc820"/><path d="M2 2C-1 12 26 26 29 17M2 2c6-2 8 4 10 8" fill="none" stroke="#f49a10" stroke-width="3"/></svg><h2>浩辰暖通空调负荷计算软件</h2>
          <button aria-label="最小化"><svg viewBox="0 0 20 20"><path d="M0 10h20" stroke="#000" stroke-width="2"/></svg></button><button aria-label="最大化"><svg viewBox="0 0 20 20"><path d="M1 1h18v18H1z" fill="none" stroke="#000" stroke-width="2"/></svg></button><button aria-label="关闭"><svg viewBox="0 0 20 20"><path d="M1 1l18 18M19 1L1 19" stroke="#000" stroke-width="2"/></svg></button></header>
        <nav class="dmenu"><i class="grip"></i><a href="#">工程(P)</a><a href="#">编辑(E)</a><a href="#">计算(C)</a><a href="#">计算书(B)</a><a href="#">管理器(M)</a><a href="#">工具(T)</a><a href="#">查看(V)</a><a href="#">帮助(H)</a><a href="#">联系我们</a></nav>
        <div class="dtools">
          <div class="tgroup"><i class="grip"></i>
            <button aria-label="新建"><svg viewBox="0 0 32 32"><path d="M6 1h15l6 6v24H6z" fill="#fff" stroke="#8898b8"/><path d="M21 1l6 6h-6z" fill="#c0d0e8"/></svg></button>
            <button aria-label="打开"><svg viewBox="0 0 32 32"><path d="M1 8h10l3 3h14v19H1z" fill="#d8a030"/><path d="M6 15h25l-5 15H1z" fill="#fcd468" stroke="#b88420"/><path d="M18 6c4-6 10-4 11 1" fill="none" stroke="#6078a0" stroke-width="2"/></svg></button>
            <button aria-label="保存"><svg><use href="#floppy"/></svg></button>
            <button aria-label="另存为"><svg viewBox="0 0 32 32"><use href="#floppy"/><path d="M10 8l18 20" stroke="#e8a850" stroke-width="4"/></svg></button>
            <button aria-label="关闭工程"><svg viewBox="0 0 32 32"><path d="M4 5l24 23M27 4L6 29" stroke="#222" stroke-width="3"/></svg></button></div>
          <div class="tgroup"><i class="grip"></i>
            <button aria-label="添加建筑"><svg viewBox="0 0 32 32"><use href="#bld"/><use href="#plus" width="16" height="16"/></svg></button>
            <button aria-label="添加楼层"><svg viewBox="0 0 32 32"><use href="#floor"/><use href="#plus" width="16" height="16"/></svg></button>
            <button aria-label="添加户型"><svg viewBox="0 0 32 32"><use href="#plan"/><use href="#plus" width="16" height="16"/></svg></button>
            <button aria-label="添加房间"><svg viewBox="0 0 32 32"><use href="#house"/><use href="#plus" width="16" height="16"/></svg></button>
            <button aria-label="删除"><svg viewBox="0 0 32 32"><path d="M4 3l24 26M27 2C18 9 10 20 6 30" stroke="#e82c10" stroke-width="6" fill="none"/></svg></button>
            <i class="bar"></i>
            <button aria-label="编辑房间"><svg viewBox="0 0 32 32"><path d="M1 8l8-7 8 7v12H1z" fill="#1a70e8"/><path d="M15 22l9-8 8 8v10H17z" fill="#d82020"/><path d="M30 1L18 13l-6 8" fill="none" stroke="#f0a020" stroke-width="5"/><path d="M10 14l12 9" stroke="#188828" stroke-width="5"/></svg></button>
            <button aria-label="提取"><svg viewBox="0 0 32 32"><use href="#cyc"/><use href="#plus" x="8" y="8" width="16" height="16"/></svg></button>
            <button aria-label="取消提取"><svg viewBox="0 0 32 32"><use href="#cyc"/><circle cx="18" cy="15" r="7" fill="#e83030"/><path d="M15 12l6 6M21 12l-6 6" stroke="#fff" stroke-width="2"/></svg></button>
            <button aria-label="删除房间"><svg viewBox="0 0 32 32"><path d="M14 9l9-8 8 8v12H14z" fill="#1a70e8"/><path d="M0 22l10-9 10 9v10H2z" fill="#d82020"/><circle cx="26" cy="22" r="7" fill="#e83030"/><path d="M23 19l6 6M29 19l-6 6" stroke="#fff" stroke-width="2"/></svg></button>
            <i class="bar"></i>
            <button aria-label="房间"><svg viewBox="0 0 32 32"><use href="#house" x="8" width="24" height="22"/><path d="M0 16l12-7 10 9v8l-9 5L1 26z" fill="#f0a030" stroke="#b86810"/><path d="M9 20l13-2v8l-9 5z" fill="#fcc878"/></svg></button>
            <button aria-label="户型"><svg viewBox="0 0 32 32"><path d="M18 1h13v18h-8V9h-5z" fill="#fcd0b0" stroke="#f06818" stroke-width="2"/><path d="M8 11h12v8h4v11H2V19h6z" fill="#d0e4ff" stroke="#2060e0" stroke-width="3"/></svg></button>
            <button aria-label="楼层"><svg viewBox="0 0 32 32"><use href="#floor" x="12" width="20" height="18"/><path d="M1 12h19v6H1zM1 24h19v7H1z" fill="#e8f0ff" stroke="#3868c0" stroke-width="2"/></svg></button>
            <button aria-label="建筑"><svg viewBox="0 0 32 32"><use href="#bld" x="4" width="28" height="26"/><path d="M2 9l6-3 5 2v24H2zM14 12h7v18h-7z" fill="#e09858"/><path d="M5 10v19M9 10v19M17 14v14" stroke="#fce0c0" stroke-width="2"/></svg></button>
            <i class="bar"></i>
            <button aria-label="百分之五"><svg viewBox="0 0 32 32"><use href="#brick"/><path d="M9 9H4v5c7-1 7 9 0 8" fill="none" stroke="#000" stroke-width="3"/><path d="M25 9l-8 14" stroke="#000" stroke-width="2"/><circle cx="17" cy="12" r="2" fill="none" stroke="#000" stroke-width="2"/><circle cx="26" cy="20" r="2" fill="none" stroke="#000" stroke-width="2"/></svg></button></div>
          <div class="tgroup"><i class="grip"></i>
            <button class="on" aria-label="计算"><svg><use href="#cyc"/></svg></button>
            <button aria-label="冷负荷公式"><svg viewBox="0 0 32 32"><path d="M12 1C-3 4-3 24 6 27l-3 4h10l-2-11-2 3C4 17 5 8 13 6z" fill="#1a90f0"/><path d="M16 20h7M16 24h7M26 18c1-5 6-2 4 2l-2 3v2" fill="none" stroke="#2868c8" stroke-width="2"/></svg></button>
            <button aria-label="热负荷公式"><svg viewBox="0 0 32 32"><path d="M12 1C-3 4-3 24 6 27l-3 4h10l-2-11-2 3C4 17 5 8 13 6z" fill="#f05060"/><path d="M16 20h7M16 24h7M26 18c1-5 6-2 4 2l-2 3v2" fill="none" stroke="#2868c8" stroke-width="2"/></svg></button>
            <button aria-label="输出表格"><svg viewBox="0 0 32 32"><path d="M2 2h28v28H2z" fill="#fff" stroke="#2a7a30" stroke-width="3"/><path d="M8 8l14 16M22 7L8 25" stroke="#2a7a30" stroke-width="5"/></svg></button>
            <button aria-label="输出文档"><svg viewBox="0 0 32 32"><path d="M2 2h28v28H2z" fill="#e8f0ff" stroke="#4868b8" stroke-width="3"/><path d="M6 8l4 15 6-13 2 13 8-15" fill="none" stroke="#2848a8" stroke-width="3"/></svg></button></div>
          <div class="tgroup"><i class="grip"></i>
            <button aria-label="外墙"><svg><use href="#brick"/></svg></button>
            <button aria-label="外窗"><svg><use href="#win"/></svg></button>
            <button aria-label="外门"><svg viewBox="0 0 32 32"><use href="#brick"/><path d="M8 6h16v20H8z" fill="#d88020"/><path d="M11 8h11v18H11z" fill="#286090"/><path d="M6 26h20v5H6z" fill="#f8c870"/></svg></button>
            <button aria-label="内墙"><svg viewBox="0 0 32 32"><use href="#hroom"/><path d="M0 0h8v21l-8 11z" fill="#f0107c"/></svg></button>
            <button aria-label="楼板"><svg viewBox="0 0 32 32"><use href="#hroom"/><path d="M8 22h24v8H2z" fill="#f8d898"/></svg></button>
            <button aria-label="内门"><svg viewBox="0 0 32 32"><path d="M0 0h32v28H0z" fill="#f0f0ec"/><path d="M11 6h11v16H11z" fill="#186090"/><path d="M0 22h32v6H0z" fill="#f8e080"/><path d="M0 28h32v4H0z" fill="#f040e0"/></svg></button>
            <button aria-label="地面"><svg viewBox="0 0 32 32"><use href="#hroom"/><path d="M0 0h8v21l-8 11z" fill="#d8d8d4"/><path d="M8 22h24v10H0z" fill="#f0107c"/></svg></button>
            <button aria-label="天窗"><svg viewBox="0 0 32 32"><path d="M1 8L15 0l16 8v22H1z" fill="#2878d8"/><path d="M11 3l10 0v18l-10 4z" fill="#a0d0fc"/><circle cx="14" cy="23" r="3" fill="#f8e040"/></svg></button>
            <button aria-label="内窗"><svg><use href="#win"/></svg></button>
            <button aria-label="屋面"><svg viewBox="0 0 32 32"><path d="M8 0h24v17H8z" fill="#fff"/><path d="M0 19h32v13H0z" fill="#fff"/><path d="M0 21h32M0 27h32" stroke="#70a0e8" stroke-width="3" stroke-dasharray="3 3"/><path d="M3 24h29M3 30h29M3 3v14" stroke="#70a0e8" stroke-width="3" stroke-dasharray="3 3"/></svg></button>
            <button aria-label="幕墙"><svg viewBox="0 0 32 32"><path d="M1 1h30v28H1z" fill="#e8f0f8" stroke="#284880" stroke-width="3"/><path d="M16 0v28" stroke="#284880" stroke-width="3"/><path d="M0 29h32v3H0z" fill="#c02080"/></svg></button></div>
          <div class="tgroup"><i class="grip"></i>
            <button aria-label="渗透"><svg viewBox="0 0 32 32"><path d="M2 4c6 6 6-4 12 2M2 12c6 6 6-4 12 2M2 20c6 6 6-4 12 2M2 28c6 4 6-4 12 1" fill="none" stroke="#2098d0" stroke-width="2"/><path d="M20 1v30M23 6h8M23 16h8M23 26h8" stroke="#10b030" stroke-width="3"/></svg></button>
            <button aria-label="人体"><svg viewBox="0 0 32 32"><circle cx="16" cy="16" r="16" fill="#0a60e0"/><path d="M6 12l20 0M16 12v8M16 19l-5 9M16 19l5 9" stroke="#fff" stroke-width="3"/><circle cx="16" cy="7" r="3" fill="#fff"/></svg></button>
            <button aria-label="灯光"><svg viewBox="0 0 32 32"><path d="M16 0c8 0 11 5 11 10 0 5-5 7-5 13H10C10 17 5 15 5 10 5 5 8 0 16 0z" fill="#fbe088" stroke="#c8a040"/><path d="M11 24h10v7H11z" fill="#707880"/></svg></button>
            <button aria-label="设备"><svg viewBox="0 0 32 32"><path d="M3 1h26v19H3z" fill="#d8dce0" stroke="#888"/><path d="M6 3h20v14H6z" fill="#1a68e0"/><path d="M10 21h12v4h5v6H4v-6h6z" fill="#a0a4a8"/></svg></button>
            <button aria-label="新风"><svg viewBox="0 0 32 32"><path d="M13 2h5v28h-5z" fill="#fff" stroke="#1848d0" stroke-width="2"/><path d="M2 6h8M2 16h8M2 26h8" stroke="#1848d0" stroke-width="3" stroke-dasharray="5 1"/><path d="M22 6h8M22 16h8M22 26h8" stroke="#109030" stroke-width="3"/></svg></button>
            <button aria-label="食物"><svg viewBox="0 0 32 32"><path d="M2 14h28c0 10-6 17-14 17S2 24 2 14z" fill="#b8bcc8"/><path d="M5 14l5-8 6 3 6-4 5 9z" fill="#48a848"/><path d="M8 12h6M16 11h6" stroke="#e83820" stroke-width="4"/></svg></button>
            <button aria-label="化学"><svg viewBox="0 0 32 32"><path d="M12 1h8v11l7 10c2 6-2 9-11 9S3 28 5 22l7-10z" fill="#98d040"/><path d="M10 1h12v6H10z" fill="#505850"/></svg></button>
            <button aria-label="水面"><svg viewBox="0 0 32 32"><path d="M10 2c-6 6 6 6 0 14M20 2c-6 6 6 6 0 14M2 20h28v8H2z" fill="none" stroke="#2090d8" stroke-width="3"/></svg></button></div>
        </div>
        <div class="dtabs"><svg class="nav" viewBox="0 0 10 18"><path d="M9 1v16L1 9z" fill="none" stroke="#222" stroke-width="2"/></svg><a class="proj" href="#"><span>浩辰大厦</span></a><svg class="nav" viewBox="0 0 10 18"><path d="M1 1v16l8-8z" fill="none" stroke="#222" stroke-width="2"/></svg></div>
        <div class="dbody">
          <section class="group treegroup"><h3>工程建筑</h3>
            <div class="tree">
              <div class="row"><i class="minus"></i><svg viewBox="0 0 32 32"><ellipse cx="16" cy="16" rx="15" ry="14" fill="#70b4ec" stroke="#2860a8"/><path d="M9 9h7v14H9zM17 13h6v10h-6z" fill="#d0e8fc" stroke="#204888" stroke-width="2"/></svg><span>浩辰大厦</span></div>
              <div class="row l1"><i class="minus"></i><svg><use href="#bld"/></svg><span>建筑</span></div>
              <div class="row l2"><i class="minus"></i><svg><use href="#floor"/></svg><span>1楼层</span></div>
              <div class="row l3"><i class="dots"></i><svg><use href="#house"/></svg><span class="sel">[1001]房间</span></div>
              <div class="hscroll"><svg viewBox="0 0 12 16"><path d="M10 1L3 8l7 7" fill="none" stroke="#555" stroke-width="3"/></svg><i></i><svg viewBox="0 0 12 16"><path d="M2 1l7 7-7 7" fill="none" stroke="#555" stroke-width="3"/></svg></div>
            </div>
          </section>
          <i class="splitter"></i>
          <section class="group datagroup"><h3>数据区</h3>
            <nav class="subtabs"><a class="on" href="#"><span>房间...</span></a><a href="#"><span>结果...</span></a></nav>
            <div class="page">
              <section class="group stats"><h3>负荷统计</h3>
                <div class="gridbox"><table>
                  <colgroup><col class="c1"><col class="c2"><col class="c3"><col class="c4"><col class="c5"><col class="c6"><col class="c4"><col></colgroup>
                  <thead><tr><th><div class="mid">分类</div></th><th><div class="mid">面积(m²)</div></th><th><div>冷负荷(W)</div></th><th><div>负荷指标(W/m²)</div></th><th></th><th><div>.热负荷(W)</div></th><th><div>负荷指标(W/m²)</div></th><th></th></tr></thead>
                  <tbody>
                  <tr class="first"><td><div class="room"><svg><use href="#house"/></svg>[1001...</div></td><td>20</td><td>0</td><td>0</td><td>.</td><td>0</td><td>0</td><td></td></tr>
                  <tr><td><td><td><td><td><td><td><td></tr><tr><td><td><td><td><td><td><td><td></tr><tr><td><td><td><td><td><td><td><td></tr><tr><td><td><td><td><td><td><td><td></tr>
                  <tr><td><td><td><td><td><td><td><td></tr><tr><td><td><td><td><td><td><td><td></tr><tr><td><td><td><td><td><td><td><td></tr><tr><td><td><td><td><td><td><td><td></tr>
                  <tr><td><td><td><td><td><td><td><td></tr><tr><td><td><td><td><td><td><td><td></tr><tr><td><td><td><td><td><td><td><td></tr><tr><td><td><td><td><td><td><td><td></tr>
                  <tr><td><td><td><td><td><td><td><td></tr><tr><td><td><td><td><td><td><td><td></tr><tr><td><td><td><td><td><td><td><td></tr><tr><td><td><td><td><td><td><td><td></tr>
                  <tr><td><td><td><td><td><td><td><td></tr><tr><td><td><td><td><td><td><td><td></tr><tr><td><td><td><td><td><td><td><td></tr><tr><td><td><td><td><td><td><td><td></tr>
                  <tr><td><td><td><td><td><td><td><td></tr><tr><td><td><td><td><td><td><td><td></tr>
                  </tbody></table></div>
                <div class="foot"><p>缝隙长度法外门/窗冷风渗透总耗热量: 0.00w</p><button class="flat" disabled>删除(e)</button></div>
              </section>
              <section class="group params"><h3>负荷参数</h3>
                <div class="roomcombo"><svg><use href="#house"/></svg><select aria-label="参数类型"><option>房间参数</option></select><svg class="chev" viewBox="0 0 14 8"><path d="M1 1l6 6 6-6" fill="none" stroke="#444" stroke-width="2"/></svg></div>
                <div class="pgrid">
                  <table>
                    <tr><td></td><td>相同个数</td><td>1</td></tr>
                    <tr><td></td><td>所属系统名</td><td></td></tr>
                    <tr class="cathead"><td><i class="minus"></i></td><td colspan="2">冷负荷参数</td></tr>
                    <tr><td></td><td>设计温度(°C)</td><td>26</td></tr>
                    <tr><td></td><td>相对湿度(%)</td><td>60</td></tr>
                    <tr><td></td><td>房间分类</td><td>轻</td></tr>
                    <tr class="cathead"><td><i class="minus"></i></td><td colspan="2">热负荷参数</td></tr>
                    <tr><td></td><td>设计温度(°C)</td><td>22</td></tr>
                    <tr><td></td><td>相对湿度(%)</td><td>60</td></tr>
                    <tr><td></td><td>使用情况</td><td>连续</td></tr>
                    <tr><td></td><td>门窗冷风渗透</td><td>缝隙</td></tr>
                    <tr><td></td><td>换气次数</td><td class="dim">1</td></tr>
                    <tr><td></td><td>渗透占围护</td><td class="dim">20</td></tr>
                    <tr class="cathead sel"><td><i class="minus"></i></td><td colspan="2">放大系数</td></tr>
                    <tr><td></td><td>冷负荷放大</td><td>1</td></tr>
                    <tr><td></td><td>热负荷放大</td><td>1</td></tr>
                    <tr><td></td><td>湿负荷放大</td><td>1</td></tr>
                  </table>
                  <div class="vscroll"><svg viewBox="0 0 12 8"><path d="M1 7l5-5 5 5" fill="none" stroke="#555" stroke-width="3"/></svg><i></i><svg viewBox="0 0 12 8"><path d="M1 1l5 5 5-5" fill="none" stroke="#555" stroke-width="3"/></svg></div>
                </div>
                <p class="desc">放大系数</p>
                <button class="flat wide" disabled>添加</button>
              </section>
            </div>
          </section>
        </div>
        <footer class="dstatus"><span>Ready</span><span class="rdy">准备</span><svg viewBox="0 0 18 18"><path d="M14 2h4v4h-4zM8 8h4v4H8zM14 8h4v4h-4zM2 14h4v4H2zM8 14h4v4H8zM14 14h4v4h-4z" fill="#bbb"/></svg></footer>
      </section>
    </div>
    <nav class="layouts">
      <button aria-label="第一个"><svg viewBox="0 0 14 14"><path d="M0 0h3v14H0zM14 0v14L4 7z" fill="#5a84bc"/></svg></button><button aria-label="上一个"><svg viewBox="0 0 14 14"><path d="M11 0v14L2 7z" fill="#5a84bc"/></svg></button><button aria-label="下一个"><svg viewBox="0 0 14 14"><path d="M3 0v14l9-7z" fill="#5a84bc"/></svg></button><button aria-label="最后一个"><svg viewBox="0 0 14 14"><path d="M11 0h3v14h-3zM0 0v14l10-7z" fill="#5a84bc"/></svg></button>
      <a class="on" href="#">模型</a><a class="lay" href="#">布局1</a><svg class="edgeline" viewBox="0 0 14 32"><path d="M14 0L1 32M6 16l7 16" fill="none" stroke="#8ca4d0"/></svg><a class="add" href="#">+</a><svg class="edgeline" viewBox="0 0 14 32"><path d="M14 0L1 32" fill="none" stroke="#8ca4d0"/></svg>
    </nav>
  </section>
</main>

<section class="command">
  <div class="cmdside"><svg viewBox="0 0 16 16"><path d="M1 1l14 14M15 1L1 15" stroke="#5a80b8" stroke-width="3"/></svg><svg viewBox="0 0 16 18"><path d="M3 1h10v9H3zM0 11h16M8 11v7" fill="none" stroke="#5a80b8" stroke-width="3"/></svg></div>
  <div class="cmdmain">
    <div class="log"><div class="lines"><p><b>命令</b>:INT_KTSLJS</p><p><b>命令</b>:INT_KTSLJS</p><p><b>命令</b>:FHJS</p></div>
      <div class="logscroll"><svg viewBox="0 0 12 8"><path d="M1 7l5-5 5 5" fill="none" stroke="#555" stroke-width="3"/></svg><svg viewBox="0 0 12 8"><path d="M1 1l5 5 5-5" fill="none" stroke="#555" stroke-width="3"/></svg></div></div>
    <div class="entry"><label for="cmd"><b>命令</b>:</label><input id="cmd" type="text"><div class="hscroll"><svg viewBox="0 0 12 16"><path d="M10 1L3 8l7 7" fill="none" stroke="#555" stroke-width="3"/></svg><i></i><svg viewBox="0 0 12 16"><path d="M2 1l7 7-7 7" fill="none" stroke="#555" stroke-width="3"/></svg></div></div>
  </div>
</section>

<footer class="status">
  <button class="scale">比例 1:100<svg class="tiny"><use href="#dn"/></svg></button><span class="coords">-56192, 20640, 0</span>
  <div class="sbtns">
    <button aria-label="捕捉"><svg viewBox="0 0 32 32"><path d="M2 6h26M2 12h26M2 18h26M2 24h20M6 2v24M12 2v24M18 2v24M24 2v20" stroke="#555a60" stroke-width="1"/><path d="M26 25h4v4h-4z" fill="#fff" stroke="#3d6eff" stroke-width="2"/></svg></button>
    <button aria-label="栅格"><svg viewBox="0 0 32 32"><path d="M3 8h26M3 14h26M3 20h26M3 26h26M8 3v26M14 3v26M20 3v26M26 3v26" stroke="#555a60" stroke-width="1"/></svg></button>
    <button aria-label="正交"><svg viewBox="0 0 32 32"><path d="M3 2v27h28M3 20h10v9" fill="none" stroke="#555a60" stroke-width="1"/></svg></button>
    <button aria-label="极轴"><svg viewBox="0 0 32 32"><circle cx="14" cy="16" r="12" fill="none" stroke="#555a60" stroke-width="2"/><path d="M14 17h18M14 17L28 3" stroke="#555a60" stroke-width="2"/></svg></button>
    <button class="on" aria-label="对象捕捉"><svg viewBox="0 0 32 32"><path d="M3 5h23v24H3z" fill="none" stroke="#555a60" stroke-width="2"/><path d="M23 1h7v7h-7z" fill="#fff" stroke="#3d6eff" stroke-width="2"/></svg></button>
    <button class="on" aria-label="对象追踪"><svg viewBox="0 0 32 32"><path d="M31 27H3L27 4M9 12l12 12" fill="none" stroke="#555a60" stroke-width="2"/></svg></button>
    <button aria-label="动态坐标"><svg viewBox="0 0 32 32"><path d="M1 14h14V1" fill="none" stroke="#444" stroke-width="4"/><path d="M17 8v22M14 16h16" stroke="#555a60" stroke-width="2"/></svg></button>
    <button class="on" aria-label="动态输入"><svg viewBox="0 0 32 32"><path d="M8 1v14M1 8h14" stroke="#555a60" stroke-width="2"/><path d="M13 12h17v19H13z" fill="#444"/><path d="M16 17h11M16 22h11M16 27h11" stroke="#fff" stroke-width="2"/></svg></button>
    <button aria-label="线宽"><svg viewBox="0 0 32 32"><path d="M2 6h28M2 27h28" stroke="#555a60" stroke-width="3"/><path d="M2 16h28" stroke="#3d6eff" stroke-width="2" stroke-dasharray="5 2"/></svg></button>
    <button aria-label="循环选择"><svg viewBox="0 0 32 32"><path d="M1 3h26" stroke="#3d6eff" stroke-width="2" stroke-dasharray="3 2"/><path d="M11 7l12 15h-6l3 8-4 1-3-8-2 3z" fill="#555a60"/></svg></button>
    <button aria-label="注释图层"><svg viewBox="0 0 32 32"><use href="#sheets"/><use href="#bolt" x="22" y="16" width="9" height="15"/></svg></button>
    <button class="on" aria-label="显示"><svg viewBox="0 0 32 32"><path d="M1 13h20v17H1z" fill="#3d6eff"/><path d="M10 4h20v17H10z" fill="#555a60" stroke="#222" stroke-width="2"/><path d="M12 6h16v13H12z" fill="none" stroke="#fff"/></svg></button>
    <button aria-label="注释比例"><svg><use href="#aa"/></svg></button>
  </div>
  <button class="ratio">1:1<svg class="tiny"><use href="#dn"/></svg></button>
  <div class="sbtns">
    <button aria-label="注释可见"><svg viewBox="0 0 32 32"><use href="#aa" x="-2"/><use href="#bulb" x="22" y="0" width="10" height="14"/></svg></button>
    <button aria-label="自动缩放"><svg viewBox="0 0 32 32"><use href="#aa" x="-2"/><path d="M29 0l-7 9h4l-2 7 8-9h-4z" fill="#4a4f56"/></svg></button>
    <button class="on" aria-label="透明"><svg viewBox="0 0 32 32"><path d="M3 3h26v26H3z" fill="#444"/><path d="M5 7h22M5 16h22M5 25h22" stroke="#fff" stroke-width="4" stroke-dasharray="4 4"/><path d="M9 11h20M9 20h20" stroke="#fff" stroke-width="4" stroke-dasharray="4 4"/></svg></button>
    <button aria-label="清单"><svg viewBox="0 0 32 32"><path d="M6 3h20v26H6z" fill="#444"/><path d="M9 11h9M9 16h9M9 21h9M9 26h9M20 11h4M20 16h4M20 21h4M20 26h4" stroke="#dce8fa" stroke-width="2"/></svg></button>
    <button class="on" aria-label="同步"><svg viewBox="0 0 32 32"><path d="M28 20A13 13 0 1 1 25 7M27 2v8h-8M16 11v10M11 16h10" fill="none" stroke="#444" stroke-width="2"/></svg></button>
  </div>
  <div class="toggles"><button class="on">联动</button><button class="on">打断</button><button class="on">中心线</button><button>加粗</button><button class="on">保温</button></div>
</footer>

<div class="ime">
  <svg class="sogou" viewBox="0 0 64 64"><path d="M5 11L48 1c4-1 6 1 7 4l8 43c1 6-1 9-6 10L22 64c-5 1-8-1-9-5L1 19c-1-5 0-7 4-8z" fill="url(#gS)"/><path d="M50 15c-12-4-36-2-38 10-1 12 34 6 35 14 1 9-23 9-33 4l2 11c16 4 42 0 42-15 0-16-34-8-35-14-1-5 16-5 26-2z" fill="#fff"/></svg>
  <b>中</b>
  <svg viewBox="0 0 28 28"><circle cx="8" cy="8" r="4" fill="none" stroke="#0a70dc" stroke-width="3"/><path d="M19 14a4 4 0 1 1 6 4c0 4-2 6-6 7 2-2 3-4 2-6z" fill="#0a70dc"/></svg>
  <svg viewBox="0 0 28 34"><path d="M14 1c4 0 6 3 6 6v9c0 8-12 8-12 0V7c0-3 2-6 6-6z" fill="#0a70dc"/><path d="M3 14c0 16 22 16 22 0M10 31h8" fill="none" stroke="#0a70dc" stroke-width="3"/></svg>
  <svg viewBox="0 0 30 28"><path d="M2 3h26v22H2z" fill="#e8f2fc" stroke="#0a70dc" stroke-width="3"/><path d="M3 10h24M3 17h24M9 4v20M15 4v14M21 4v20" stroke="#0a70dc" stroke-width="2"/></svg>
  <svg viewBox="0 0 30 28"><path d="M9 0c2 4 10 4 12 0l9 5-3 9-4-2v16H7V12l-4 2-3-9z" fill="#0a70dc"/></svg>
  <svg viewBox="0 0 28 28"><path d="M3 2h10v10H5c-3 0-4-6-2-10zM1 16h12v10H5c-3 0-5-4-4-10zM15 16h12v5c0 4-8 6-12 5z" fill="#0a70dc"/><path d="M17 3h8v8h-8z" fill="none" stroke="#0a70dc" stroke-width="4"/></svg>
</div>
<i class="edge"></i>
<svg class="note n1" viewBox="0 0 120 224"><path d="M0 0L105 204l-12 4 21 14-1-28-5 4z" fill="#fc2416" stroke="#fc2416"/></svg>
<i class="mark m1"></i>
<i class="mark m2"></i>
<svg class="note n2" viewBox="0 0 124 66"><path d="M1 64L104 8l-10-2 29-5-18 21-2-8z" fill="#fc2416" stroke="#fc2416"/></svg>
</body>
</html>
```
FILE: styles.css
```css
*{box-sizing:border-box}
body{margin:0;min-height:100vh;display:flex;flex-direction:column;position:relative;background:#bfdbff;color:#111;
  font:24px/30px "Open Sans","Noto Sans CJK SC",sans-serif;overflow-x:hidden}
button,select,input{font:inherit;color:inherit;background:none;border:0;padding:0;margin:0;appearance:none}
button{white-space:nowrap}
a{color:inherit;text-decoration:none}
h1,h2,h3,p,ul{margin:0;padding:0;font:inherit;list-style:none}
svg{display:block;flex:none}
i{font-style:normal}
.defs{position:absolute;width:0;height:0}
.ar{width:18px;height:12px}
.tiny{width:11px;height:8px}
.gray{filter:grayscale(1)}

/* title bar */
.titlebar{display:flex;height:67px;background:#fff;color:#000;position:relative;z-index:1}
.logo{width:87px;padding:0 0 0 7px;align-self:flex-start}
.logo svg{width:76px;height:76px}
.qat{display:flex;align-items:center;width:637px;height:65px;padding:0 8px 4px 6px;background:#e9eef2;border:2px solid #a8b0c0;border-width:0 3px 2px 1px;border-radius:0 0 10px 0}
.qat button{width:38px;display:grid;place-items:center}
.qat button svg{width:30px;height:30px}
.qat>.tiny{margin:0 4px}
.workspace{flex:1;display:flex;align-items:center;height:63px;margin:4px -8px 0 2px;padding:0 10px 2px 1px;background:#e9f1fc;border-left:1px solid #a8c0e0}
.workspace select{flex:1}
.custom{width:50px;display:grid;place-items:center;padding-bottom:8px}
.custom svg{width:12px;height:16px}
.titlebar h1{flex:1;text-align:center;line-height:62px;padding-left:52px}
.winbtns{display:flex;padding:0 4px 13px 0}
.winbtns button{width:92px;display:grid;place-items:center}
.winbtns svg{width:20px;height:20px}

.menubar{display:flex;gap:25px;height:36px;padding-left:59px;background:#dde8ee;border-bottom:2px solid #c2c6cc;color:#1c4587;line-height:38px}
.menubar u{text-underline-offset:3px;text-decoration-thickness:2px}
.ribbontabs{display:flex;height:39px;padding:2px 0;color:#1c4587;line-height:40px}
.ribbontabs a{padding:0 15px;white-space:nowrap}
.ribbontabs a.on{background:#eff5fd;border:1px solid #9fc0ec;border-bottom:0;border-radius:5px 5px 0 0;padding:0 14px;line-height:38px}
.docbtns{margin-left:auto;display:flex;align-items:center}
.docbtns button{width:38px;display:flex;align-items:center;justify-content:center}
.docbtns button:first-child{width:62px;justify-content:flex-start}
.docbtns svg:not(.tiny){width:22px;height:22px}

/* ribbon */
.ribbon{display:flex;gap:4px;height:180px;margin:0 2px 2px 0;padding:2px 3px;border:1px solid #8db4e8;border-bottom:2px solid #7fc4e8;border-radius:4px;
  background:linear-gradient(#dbe6f4 0 28%,#c7d8ed 30%,#d4e4f2 80%,#e0f2fd)}
.panel{display:flex;flex-direction:column;border:1px solid #9dbddd;border-radius:4px;overflow:hidden;background:linear-gradient(#dde7f4 0 18px,#c8d8ed 20px,#d6e5f4 139px)}
.panel.lit{background:linear-gradient(#eaf2fc 0 18px,#dae6f8 20px,#dce9fa 139px)}
.pbody{display:flex;flex:1;color:#1c4587}
.panel h2{display:flex;align-items:center;justify-content:center;gap:7px;height:33px;padding-top:3px;background:#bfd6ee;color:#4272b0;position:relative}
.panel.lit h2{background:#c6defd}
.launch{width:16px;height:16px;position:absolute;right:8px}
.big{width:78px;display:flex;flex-direction:column;align-items:center;line-height:30px;padding-top:4px}
.big>svg:first-child{width:64px;height:64px;margin-bottom:10px}
.big .ar{margin-top:8px}
.smalls{display:grid;grid-template-columns:32px;grid-auto-rows:38px;align-items:center;justify-items:center;align-content:start;padding-top:2px}
.smalls.two{grid-template-columns:36px 28px}
.smalls.four{grid-template-columns:34px 28px 34px 28px}
.smalls button svg{width:30px;height:30px}
.p-draw{width:376px}.p-modify{width:404px}.p-layer{width:447px}.p-anno{width:144px}.p-block{width:201px}.p-prop{width:462px}.p-group{width:122px}.p-util{width:182px}.p-clip{width:123px}
.tools{display:grid;grid-template-columns:repeat(3,91px);grid-auto-rows:38px;align-content:start;padding:2px 0 0 7px}
.tools button{display:flex;align-items:center;gap:5px}
.tools button svg{width:28px;height:30px}
.layercol{padding:1px 0 0;flex:1}
.layericons{display:grid;grid-template-columns:repeat(7,40px);grid-auto-rows:38px;place-items:center}
.layericons svg{width:32px;height:32px}
.combo{display:flex;align-items:center;gap:5px;height:38px;padding:0 6px;background:#eaf2fc;border:1px solid #a9c1e2;color:#000}
.combo select{flex:1;min-width:0}
.layercol .combo{margin-right:3px;gap:7px}
.i16{width:16px;height:28px}.i24{width:24px;height:26px}
.swatch{width:27px;height:28px;background:#fff;border:1px solid #000}
.combos{flex:1;padding:1px 3px 0 2px}
.line{width:160px;height:2px;background:#111;margin-right:4px}
.p-anno .pbody{padding-left:1px}
.p-group .big{width:80px}.p-clip .big{width:80px}
.p-util .smalls{grid-template-columns:34px}.p-util .smalls.two{grid-template-columns:38px 24px}

/* side panel */
.work{flex:1;display:flex}
.side{width:240px;background:#d6e4f4;padding-bottom:4px}
.sidehead{display:flex;align-items:center;height:41px;background:#b8cfea;color:#34629f;padding:0 2px 0 3px;margin:0 1px}
.sidehead h2{flex:1}
.sidehead button{padding:0 5px}
.sidehead svg{width:16px;height:17px}
.sidebox{background:#fff;margin:6px 4px 0;padding:0 3px 4px 3px;font-family:"Liberation Serif","Noto Sans CJK SC",serif;font-weight:300}
.acc{display:flex;align-items:center;width:100%;height:39px;margin:0;padding:0 14px 0 40px;background:#dbe9fd;border:1px solid #b6bfcb;border-top-width:0}
.acc.up{height:40px;border-top-width:1px}
.acc.top{height:40px;border-top-width:1px}
.acc.last{margin-bottom:4px}
.acc svg{width:10px;height:6px;margin-left:auto;fill:#444}
.side li{height:40px}
.side li.sep{border-bottom:2px solid #52b4ec;height:43px}
.side li button{display:flex;align-items:center;gap:6px;height:40px;padding-left:5px}
.side li svg{width:30px;height:28px}
.cat{display:flex;align-items:center;gap:12px;width:100%;height:51px;padding-left:10px;border:1px solid #b0bccc;border-top:0;background:linear-gradient(#e4eefe,#c4dcff 48%,#aed0fe 50%,#c8defe)}
.cat svg{width:42px;height:40px}
.cat.on{background:linear-gradient(#fdd09a,#fdbc6c 38%,#fda43c 42%,#fddb76);border-top:1px solid #b0bccc}

/* drawing area */
.stage{flex:1;min-width:0;display:flex;flex-direction:column;margin-left:5px}
.doctabs{height:31px;background:#f0f0f0;font-family:"Liberation Mono",monospace;font-size:20px}
.doctabs a{display:flex;align-items:center;width:202px;height:31px;padding:4px 15px 0 45px;background:linear-gradient(#feeec4,#fdc65e 50%,#fee7b4);clip-path:polygon(32px 0,100% 0,100% 100%,0 100%)}
.doctabs svg{width:14px;height:14px;margin-left:auto}
.canvas{flex:1;position:relative;background:#212830;border:1px solid #777;border-width:2px 0 0 1px}
.cross{position:absolute;left:0;top:738px;width:24px;height:146px}
.layouts{display:flex;align-items:flex-start;height:42px;padding-left:0;margin-left:-3px;border-top:2px solid #777;background:#d6e4f4;border-bottom:6px solid #bfdbff;line-height:34px;color:#000}
.layouts button{width:26px;height:34px;display:grid;place-items:center}
.layouts svg{width:14px;height:14px}
.layouts a.on{width:80px;height:32px;text-align:center;background:#212830;color:#fff;font-weight:700;clip-path:polygon(0 0,100% 0,82% 100%,20% 100%)}
.layouts a.lay{width:64px;white-space:nowrap;margin-left:-3px}
.layouts .edgeline{width:14px;height:32px}
.layouts a.add{width:14px;text-align:center}

/* load calculation window */
.dialog{position:absolute;left:22px;right:662px;top:15px;bottom:26px;display:flex;flex-direction:column;background:#f0f0f0;box-shadow:0 4px 18px #0009;
  font-family:"Liberation Serif","Noto Sans CJK SC",serif;font-weight:300}
.dtitle{display:flex;align-items:center;height:57px;background:#fff;padding-left:13px;font-family:"Open Sans","Noto Sans CJK SC",sans-serif;font-weight:400;color:#000}
.dtitle>svg{width:30px;height:30px;margin-right:6px}
.dtitle h2{flex:1}
.dtitle button{width:92px;display:grid;place-items:center}
.dtitle button svg{width:20px;height:20px}
.dmenu{display:flex;align-items:center;gap:19px;height:39px;background:linear-gradient(90deg,#80b3e2,#b4d8f6);padding-left:4px}
.grip{width:4px;height:26px;flex:none;background:repeating-linear-gradient(#345 0 2px,transparent 2px 5px)}
.dmenu .grip{margin-right:-8px}
.dtools{display:flex;height:47px;background:linear-gradient(#d4eaff,#b0d6fa 50%,#76b5ec);border-bottom:2px solid #5a6a7a;overflow:hidden}
.tgroup{display:flex;align-items:center;padding-left:3px;border-right:2px solid #a4d0f6;flex:none}
.tgroup .grip{height:24px;margin-right:3px}
.dtools button{width:44px;height:42px;display:grid;place-items:center}
.dtools button svg{width:32px;height:30px}
.dtools button.on{background:#fdb060;border:1px solid #345}
.bar{width:2px;height:26px;margin:0 3px;background:#80b0dc;border-right:1px solid #fff}
.dtabs{display:flex;align-items:center;justify-content:space-between;height:46px;padding:0 16px 0 10px;background:linear-gradient(#72b5ee,#c8e4fe);border-bottom:2px solid #2ca8f2}
.nav{width:10px;height:18px}
.proj{align-self:flex-end;width:148px;height:41px;margin:0 auto 0 11px;background:#2ca8f2;clip-path:polygon(40px 0,100% 0,100% 100%,0 100%)}
.proj span{display:block;height:41px;margin:1px 1px 0 0;padding:2px 0 0 40px;line-height:36px;background:#fff;clip-path:polygon(41px 0,100% 0,100% 100%,2px 100%)}
.dbody{flex:1;display:flex;min-height:0;padding:22px 14px 13px 13px;border:2px solid #2ca8f2;border-top:0}
.group{display:flex;flex-direction:column;border:1px solid #dcdcdc}
.group h3{align-self:flex-start;flex:none;height:21px;margin:-15px 0 0 8px;padding:0 2px;line-height:27px;overflow:hidden;background:#f0f0f0}
.treegroup{width:219px}
.treegroup h3{height:18px;margin-top:-13px;line-height:26px}
.tree{flex:1;display:flex;flex-direction:column;margin:0 4px 5px;padding:0 2px 2px;border:2px solid #828790;background:#fff;overflow:hidden}
.row{display:flex;align-items:center;height:26px;gap:3px;padding-left:1px;white-space:nowrap}
.row svg{width:17px;height:17px;margin-right:1px}
.l1{padding-left:20px}.l2{padding-left:39px}.l3{padding-left:64px}
.minus{display:block;flex:none;width:16px;height:16px;border:1px solid #888;background:linear-gradient(#345,#345) center/8px 2px no-repeat #fff}
.dots{width:10px;border-top:1px dotted #888}
.sel{background:#f0f0f0}
.hscroll{display:flex;align-items:center;justify-content:space-between;height:32px;margin-top:auto;padding:0 12px;background:#f0f0f0}
.hscroll svg{width:10px;height:14px}
.hscroll i{align-self:stretch;width:125px}
.hscroll i{background:#cdcdcd}
.splitter{width:4px;margin:-6px 3px 0 5px;background:#c8c8c8;border-right:1px solid #888}
.datagroup{flex:1;min-width:0}
.datagroup>h3{position:relative;z-index:2;height:27px;margin:-13px 0 -11px 5px}
.subtabs{display:flex;height:38px;margin:0 4px;padding:4px 0 0 1px;background:linear-gradient(#72b5ee,#c8e4fe)}
.subtabs a{width:126px;height:34px;background:#2ca8f2;clip-path:polygon(14px 0,112px 0,100% 100%,0 100%);position:relative;z-index:1}
.subtabs span{display:block;height:34px;margin:1px;padding-left:20px;line-height:32px;background:#fff;clip-path:polygon(14px 0,110px 0,100% 100%,0 100%)}
.subtabs a+a{margin-left:-10px;width:118px;z-index:0;clip-path:polygon(8px 0,104px 0,100% 100%,0 100%)}
.subtabs a+a span{background:linear-gradient(#9ce0fe,#84c0ee);padding-left:12px;clip-path:polygon(8px 0,102px 0,100% 100%,0 100%)}
.page{flex:1;display:flex;gap:9px;margin:0 4px 5px;padding:24px 10px 10px 9px;border:3px solid #68bcf4;border-top-width:1px}
.stats{flex:1;min-width:0;padding:0 11px 0 9px}
.stats h3,.params h3{margin-left:-1px}
.gridbox{background:#fcfcfc;border:1px solid #777;border-width:2px 0 0 1px}
.stats table{width:100%;table-layout:fixed;border-collapse:collapse}
.c1{width:140px}.c2{width:69px}.c3{width:85px}.c4{width:120px}.c5{width:20px}.c6{width:100px}
.stats th,.stats td{height:30px;padding:0;line-height:28px;border:1px solid #cfcfcf;border-left:0;border-top:0;font-weight:300;text-align:center}
.stats th{background:#f0f0f0;border-color:#999}
.stats th div{overflow:hidden;white-space:nowrap;text-align:left;height:28px;padding-left:2px}
.stats th .mid{display:flex;justify-content:center;padding:0}
.stats tbody tr:nth-child(even) td{background:#f0f0f0}
.stats tbody td{background:#f7f7f7}
.stats tbody tr td:last-child,.stats tbody tr:nth-child(even) td:last-child{background:#fcfcfc}
.stats .first td:not(:last-child){border-bottom:1px dotted #222}
.room{display:flex;align-items:center;gap:6px;padding-left:16px;height:28px}
.room svg{width:18px;height:18px}
.foot{flex:1;display:flex;align-items:center;justify-content:space-between}
.flat{width:130px;height:21px;line-height:22px;overflow:hidden;background:#ccc;border:1px solid #bfbfbf;color:#888}
.params{width:226px;padding:0 9px 9px}
.roomcombo{display:flex;align-items:center;height:25px;padding:0 6px 0 3px;background:#e1e1e1;border:1px solid #999;border-bottom-width:2px;overflow:hidden}
.roomcombo svg{width:17px;height:17px;margin-right:3px}
.roomcombo select{flex:1;min-width:0;height:30px;line-height:30px}
.roomcombo .chev{width:14px;height:8px;margin:0}
.pgrid{flex:1;display:flex;border-left:1px solid #888;background:linear-gradient(90deg,#f0f0f0 13px,#fff 13px)}
.pgrid table{width:169px;height:612px;table-layout:fixed;border-collapse:collapse;font-family:"Noto Sans","Noto Sans CJK SC",sans-serif;font-weight:400}
.pgrid td{height:36px;padding:0 0 0 2px;line-height:32px;white-space:nowrap;overflow:hidden;border-bottom:1px dashed #999}
.pgrid td:first-child{width:13px;background:#f0f0f0;padding:0;border:0}
.pgrid td:nth-child(2){width:121px;border-right:1px solid #999;font-weight:300}
.pgrid .cathead td:nth-child(2){font-weight:700;background:#f0f0f0;border-right:0}
.pgrid .cathead.sel td:nth-child(2){background:#0078d7;color:#fff}
.pgrid .minus{width:10px;height:10px;margin:0 auto;background-size:6px 1px}
.pgrid .dim{color:#777}
.vscroll{flex:1;display:flex;flex-direction:column;align-items:center;background:#f0f0f0;padding:15px 0 12px 2px}
.vscroll svg{width:13px;height:9px}
.vscroll i{align-self:stretch;height:456px;margin:auto 0 14px;background:#cdcdcd}
.desc{height:49px;padding:0 4px;line-height:40px;font-weight:700;border:1px solid #888;border-right-color:#fff;border-bottom-color:#fff}
.flat.wide{width:100%;margin-top:10px;font-weight:300}
.dstatus{display:flex;align-items:center;height:31px;padding:4px 0 0 4px;border-top:2px solid #ddd}
.rdy{margin-left:auto;margin-right:113px}
.dstatus svg{width:18px;height:18px}

/* command line */
.command{display:flex;height:120px;border-top:2px solid #777;background:#fff;color:#000;font-family:"DejaVu Sans Mono","Noto Sans CJK SC",monospace;font-size:23px}
.command b{font-size:28px;font-weight:300}
.cmdside{width:42px;background:#bad0ec;border-right:2px solid #888;padding:5px 0 0 5px;display:grid;gap:10px;align-content:start}
.cmdside svg{width:16px;height:17px}
.cmdmain{flex:1;display:flex;flex-direction:column}
.log{flex:1;display:flex;border-bottom:2px solid #777;overflow:hidden;height:82px}
.lines{flex:1;display:flex;flex-direction:column;justify-content:flex-end;padding:0 0 2px 4px;height:82px}
.lines p{flex:none;height:35px;line-height:35px}
.logscroll{width:35px;background:#f0f0f0;display:flex;flex-direction:column;justify-content:space-between;align-items:center;padding:15px 0 13px}
.logscroll svg{width:12px;height:8px}
.entry{display:flex;align-items:center;height:36px;padding-left:4px}
.entry label{line-height:32px}
.entry input{flex:1}
.entry .hscroll{width:160px;height:32px;margin:0 36px 0 0}
.entry .hscroll i{width:34px;margin:0 auto 0 12px}

/* status bar */
.status{display:flex;align-items:center;height:49px;padding-bottom:1px;background:linear-gradient(#dce9fb 0 8px,#b2cff4 12px,#c4daf8);border-top:2px solid #6a90c8;color:#1c4587}
.scale{display:flex;align-items:center;gap:8px;width:133px;padding-left:3px;font-size:22px}
.coords{width:259px;font-size:22px}
.sbtns,.toggles{display:flex;gap:3px}
.sbtns button{width:35px;height:42px;display:grid;place-items:center}
.sbtns svg{width:28px;height:28px}
.status .on{background:linear-gradient(#fffbe0,#fdf0b4 45%,#fddb6c 50%,#fde898);border:1px solid #c8b878;border-radius:3px}
.ratio{display:flex;align-items:center;gap:8px;width:48px;font-size:22px}
.status .ratio+.sbtns{margin-left:2px}
.toggles{margin-left:auto;padding-right:332px}
.toggles button{height:42px;padding:0 1px;border:1px solid transparent;color:#1c4587}
.toggles .on{color:#001070}

/* floating input bar */
.ime{position:absolute;right:0;bottom:2px;width:330px;height:50px;display:flex;align-items:center;gap:20px;padding-left:49px;background:#fff;border:1px solid #d4dce8;z-index:2}
.ime b{color:#0a70dc;font-size:28px}
.ime svg{width:28px;height:28px}
.ime .sogou{position:absolute;left:-24px;top:-12px;width:64px;height:62px}
.edge{position:absolute;right:0;bottom:52px;width:20px;height:38px;border-radius:6px 0 0 0;background:repeating-linear-gradient(#4c5060 0 2px,#6a7084 2px 5px);border:2px solid #444a58}

/* review marks */
.mark{position:absolute;border:5px solid #fc2416;border-radius:6px}
.m1{left:1px;top:402px;width:183px;height:52px}
.m2{left:1951px;top:620px;width:195px;height:74px}
.note{position:absolute}
.n1{left:194px;top:423px;width:120px;height:224px}
.n2{left:1852px;top:1170px;width:124px;height:66px}
```
